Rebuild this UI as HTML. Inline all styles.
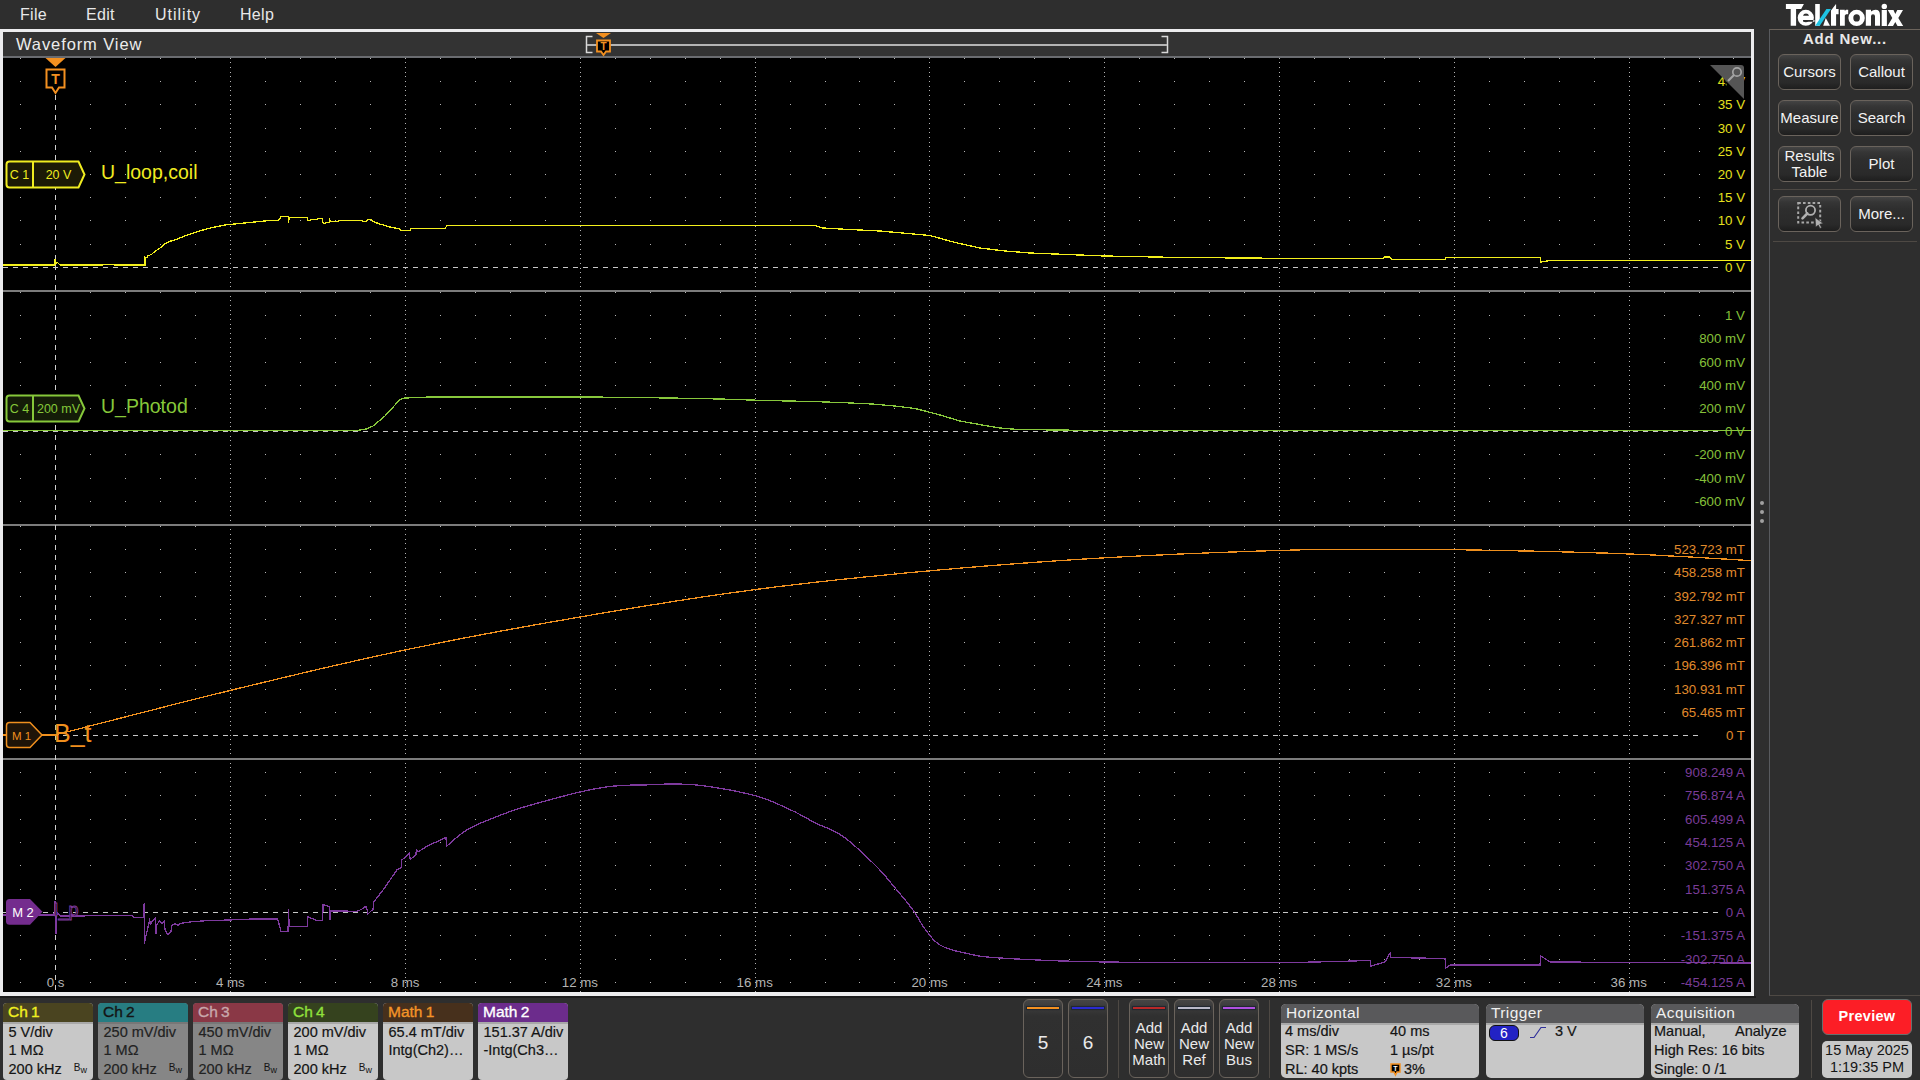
<!DOCTYPE html>
<html><head><meta charset="utf-8"><style>
*{box-sizing:border-box}
html,body{margin:0;padding:0;width:1920px;height:1080px;overflow:hidden;background:#2e2e2e;font-family:"Liberation Sans", sans-serif}
.abs{position:absolute}
.menu{left:0;top:0;width:1920px;height:29px;background:#2e2e2e}
.menu span{position:absolute;top:6px;font-size:16px;color:#e8e8e8;letter-spacing:0.3px}
.btn{position:absolute;width:63px;height:36px;border:1px solid #6a635c;border-radius:6px;background:linear-gradient(#444 0,#363636 5px,#2e2e2e 12px,#2a2a2a 80%,#1e1e1e 100%);color:#f2f2f2;font-size:15px;text-align:center;line-height:33px}
.sep{position:absolute;height:1px;background:#4e4944}
.chb{position:absolute;top:1003px;width:90px;height:77px;border-radius:4px;overflow:hidden;background:#c8c8c8}
.chb .hd{height:19px;font-size:15.5px;padding-left:5px;line-height:17.5px;-webkit-text-stroke:0.35px currentColor;word-spacing:-1px}
.chb .ln{height:2px;background:#a8a8a8}
.chb .bd{font-size:14.5px;color:#141414;padding-left:5.5px;line-height:18.9px;margin-top:-1.5px;-webkit-text-stroke:0.2px currentColor}
.bw{position:absolute;right:6px;top:60px;font-size:10px;color:#141414;line-height:10px}
.vbtn{position:absolute;top:999px;width:40px;height:79px;border:1px solid #6a635c;border-radius:6px;background:linear-gradient(#454545 0,#3a3a3a 8px,#303030 16px,#2e2e2e 100%);color:#eaeaea;text-align:center}
.vbtn .bar{position:absolute;left:3px;right:3px;top:7px;height:2px;box-shadow:0 0 1px 1px #1e2630}
.pnl{position:absolute;top:1004px;height:74px;border-radius:5px;overflow:hidden;background:#c8c8c8}
.pnl .hd{height:19px;background:#59595b;color:#f0f0f0;font-size:15.5px;line-height:17px;padding-left:5px;letter-spacing:0.4px}
.pnl .ln{height:2px;background:#a9a9a9}
.pnl .r{position:absolute;font-size:14.5px;color:#141414;white-space:nowrap;margin-top:-1.5px;line-height:17px;-webkit-text-stroke:0.2px currentColor}
</style></head><body>
<div class="abs menu">
<span style="left:20px">File</span><span style="left:86px">Edit</span><span style="left:155px;letter-spacing:1px">Utility</span><span style="left:240px">Help</span>
</div>
<svg class="abs" style="left:0;top:0" width="1920" height="32" viewBox="0 0 1920 32">
<g fill="#fff">
<path d="M1785.9 4.1 H1803.9 L1801.2 8.9 H1796.1 V25.7 H1790.7 V8.9 H1785.9 Z"/>
<path fill-rule="evenodd" d="M1813.9 17.8 A8.1 8 0 1 1 1797.7 17.8 A8.1 8 0 1 1 1813.9 17.8 Z M1803 15.8 Q1803.5 13.6 1806 13.6 Q1808.5 13.6 1809 15.8 Z M1803 20 H1814.5 V21.8 H1808.5 Q1806 22.6 1803.2 21.8 Z"/>
<path d="M1815.2 4 H1819.8 V25.8 H1815.2 Z"/>
<path d="M1823.2 25.8 L1830 25.8 L1825.8 18.1 Z"/>
<path d="M1831 10.5 L1835.8 4.3 H1836.1 V9 H1838.6 V14.2 H1836.1 V25.8 H1831 Z"/>
<path d="M1840 9.8 H1844.8 V11 L1846 9.8 H1848.2 V14.2 H1846 L1844.8 15.5 V25.8 H1840 Z"/>
<path fill-rule="evenodd" d="M1864.8 17.9 A8.2 8.1 0 1 1 1848.4 17.9 A8.2 8.1 0 1 1 1864.8 17.9 Z M1859.9 17.9 A3.3 3.7 0 1 0 1853.3 17.9 A3.3 3.7 0 1 0 1859.9 17.9 Z"/>
<path d="M1865.8 25.8 V9.8 H1871 V11.5 Q1873 9.8 1875.5 9.8 Q1880 9.8 1880 15 V25.8 H1875 V16.2 Q1875 14.2 1873 14.2 Q1871 14.2 1871 16.2 V25.8 Z"/>
<path d="M1881.7 10 H1886.9 V26 H1881.7 Z"/><circle cx="1884.3" cy="6.4" r="2.7"/>
<path d="M1887.8 10 H1893.5 L1895.3 13.9 L1897.3 10 H1903 L1898.3 18 L1903.2 26 H1897.5 L1895.3 22 L1893 26 H1887.5 L1892.3 18 Z"/>
</g>
<path d="M1815.2 25.8 L1819.8 25.8 L1831 9 L1826.4 9 Z" fill="#1ec4e4"/>
</svg>
<!-- waveform panel -->
<div class="abs" style="left:0;top:29px;width:1754px;height:967px;background:#ececee"></div><div class="abs" style="left:0;top:996px;width:1756px;height:1.5px;background:#1c1c1c"></div>
<div class="abs" style="left:3px;top:32px;width:1748px;height:24px;background:#333333"></div>
<div class="abs" style="left:3px;top:56px;width:1748px;height:2px;background:#6a6c70"></div>
<div class="abs" style="left:16px;top:35px;font-size:16.5px;color:#ececec;letter-spacing:0.9px">Waveform View</div>
<div class="abs" style="left:3px;top:58px;width:1748px;height:934px;background:#000"></div>
<svg class="abs" style="left:0;top:0" width="1920" height="1080" viewBox="0 0 1920 1080" font-family='"Liberation Sans", sans-serif'>
<!-- overview bar -->
<path d="M592.5 36.5 H586.5 V52.5 H592.5" fill="none" stroke="#d8d8d8" stroke-width="1.5"/>
<path d="M1161.5 36.5 H1167.5 V52.5 H1161.5" fill="none" stroke="#d8d8d8" stroke-width="1.5"/>
<rect x="587" y="44" width="580" height="2" fill="#b4b4b4"/>
<path d="M596 33 L611 33 L603.5 38 Z" fill="#f39020"/>
<path d="M597 40.5 H610 V51.5 H606 L603.5 55 L601 51.5 H597 Z" fill="#000" stroke="#f39020" stroke-width="1.8"/>
<text x="603.5" y="50" text-anchor="middle" fill="#f39020" font-size="10" font-weight="700">T</text>
<path d="M20 58h1v1h-1zM90 58h1v1h-1zM125 58h1v1h-1zM160 58h1v1h-1zM195 58h1v1h-1zM265 58h1v1h-1zM300 58h1v1h-1zM335 58h1v1h-1zM370 58h1v1h-1zM440 58h1v1h-1zM475 58h1v1h-1zM510 58h1v1h-1zM545 58h1v1h-1zM615 58h1v1h-1zM650 58h1v1h-1zM685 58h1v1h-1zM720 58h1v1h-1zM790 58h1v1h-1zM825 58h1v1h-1zM859 58h1v1h-1zM894 58h1v1h-1zM964 58h1v1h-1zM999 58h1v1h-1zM1034 58h1v1h-1zM1069 58h1v1h-1zM1139 58h1v1h-1zM1174 58h1v1h-1zM1209 58h1v1h-1zM1244 58h1v1h-1zM1314 58h1v1h-1zM1349 58h1v1h-1zM1384 58h1v1h-1zM1419 58h1v1h-1zM1489 58h1v1h-1zM1524 58h1v1h-1zM1559 58h1v1h-1zM1594 58h1v1h-1zM1664 58h1v1h-1zM1699 58h1v1h-1zM1733 58h1v1h-1zM20 81h1v1h-1zM90 81h1v1h-1zM125 81h1v1h-1zM160 81h1v1h-1zM195 81h1v1h-1zM265 81h1v1h-1zM300 81h1v1h-1zM335 81h1v1h-1zM370 81h1v1h-1zM440 81h1v1h-1zM475 81h1v1h-1zM510 81h1v1h-1zM545 81h1v1h-1zM615 81h1v1h-1zM650 81h1v1h-1zM685 81h1v1h-1zM720 81h1v1h-1zM790 81h1v1h-1zM825 81h1v1h-1zM859 81h1v1h-1zM894 81h1v1h-1zM964 81h1v1h-1zM999 81h1v1h-1zM1034 81h1v1h-1zM1069 81h1v1h-1zM1139 81h1v1h-1zM1174 81h1v1h-1zM1209 81h1v1h-1zM1244 81h1v1h-1zM1314 81h1v1h-1zM1349 81h1v1h-1zM1384 81h1v1h-1zM1419 81h1v1h-1zM1489 81h1v1h-1zM1524 81h1v1h-1zM1559 81h1v1h-1zM1594 81h1v1h-1zM1664 81h1v1h-1zM1699 81h1v1h-1zM1733 81h1v1h-1zM20 104h1v1h-1zM90 104h1v1h-1zM125 104h1v1h-1zM160 104h1v1h-1zM195 104h1v1h-1zM265 104h1v1h-1zM300 104h1v1h-1zM335 104h1v1h-1zM370 104h1v1h-1zM440 104h1v1h-1zM475 104h1v1h-1zM510 104h1v1h-1zM545 104h1v1h-1zM615 104h1v1h-1zM650 104h1v1h-1zM685 104h1v1h-1zM720 104h1v1h-1zM790 104h1v1h-1zM825 104h1v1h-1zM859 104h1v1h-1zM894 104h1v1h-1zM964 104h1v1h-1zM999 104h1v1h-1zM1034 104h1v1h-1zM1069 104h1v1h-1zM1139 104h1v1h-1zM1174 104h1v1h-1zM1209 104h1v1h-1zM1244 104h1v1h-1zM1314 104h1v1h-1zM1349 104h1v1h-1zM1384 104h1v1h-1zM1419 104h1v1h-1zM1489 104h1v1h-1zM1524 104h1v1h-1zM1559 104h1v1h-1zM1594 104h1v1h-1zM1664 104h1v1h-1zM1699 104h1v1h-1zM1733 104h1v1h-1zM20 128h1v1h-1zM90 128h1v1h-1zM125 128h1v1h-1zM160 128h1v1h-1zM195 128h1v1h-1zM265 128h1v1h-1zM300 128h1v1h-1zM335 128h1v1h-1zM370 128h1v1h-1zM440 128h1v1h-1zM475 128h1v1h-1zM510 128h1v1h-1zM545 128h1v1h-1zM615 128h1v1h-1zM650 128h1v1h-1zM685 128h1v1h-1zM720 128h1v1h-1zM790 128h1v1h-1zM825 128h1v1h-1zM859 128h1v1h-1zM894 128h1v1h-1zM964 128h1v1h-1zM999 128h1v1h-1zM1034 128h1v1h-1zM1069 128h1v1h-1zM1139 128h1v1h-1zM1174 128h1v1h-1zM1209 128h1v1h-1zM1244 128h1v1h-1zM1314 128h1v1h-1zM1349 128h1v1h-1zM1384 128h1v1h-1zM1419 128h1v1h-1zM1489 128h1v1h-1zM1524 128h1v1h-1zM1559 128h1v1h-1zM1594 128h1v1h-1zM1664 128h1v1h-1zM1699 128h1v1h-1zM1733 128h1v1h-1zM20 151h1v1h-1zM90 151h1v1h-1zM125 151h1v1h-1zM160 151h1v1h-1zM195 151h1v1h-1zM265 151h1v1h-1zM300 151h1v1h-1zM335 151h1v1h-1zM370 151h1v1h-1zM440 151h1v1h-1zM475 151h1v1h-1zM510 151h1v1h-1zM545 151h1v1h-1zM615 151h1v1h-1zM650 151h1v1h-1zM685 151h1v1h-1zM720 151h1v1h-1zM790 151h1v1h-1zM825 151h1v1h-1zM859 151h1v1h-1zM894 151h1v1h-1zM964 151h1v1h-1zM999 151h1v1h-1zM1034 151h1v1h-1zM1069 151h1v1h-1zM1139 151h1v1h-1zM1174 151h1v1h-1zM1209 151h1v1h-1zM1244 151h1v1h-1zM1314 151h1v1h-1zM1349 151h1v1h-1zM1384 151h1v1h-1zM1419 151h1v1h-1zM1489 151h1v1h-1zM1524 151h1v1h-1zM1559 151h1v1h-1zM1594 151h1v1h-1zM1664 151h1v1h-1zM1699 151h1v1h-1zM1733 151h1v1h-1zM20 174h1v1h-1zM90 174h1v1h-1zM125 174h1v1h-1zM160 174h1v1h-1zM195 174h1v1h-1zM265 174h1v1h-1zM300 174h1v1h-1zM335 174h1v1h-1zM370 174h1v1h-1zM440 174h1v1h-1zM475 174h1v1h-1zM510 174h1v1h-1zM545 174h1v1h-1zM615 174h1v1h-1zM650 174h1v1h-1zM685 174h1v1h-1zM720 174h1v1h-1zM790 174h1v1h-1zM825 174h1v1h-1zM859 174h1v1h-1zM894 174h1v1h-1zM964 174h1v1h-1zM999 174h1v1h-1zM1034 174h1v1h-1zM1069 174h1v1h-1zM1139 174h1v1h-1zM1174 174h1v1h-1zM1209 174h1v1h-1zM1244 174h1v1h-1zM1314 174h1v1h-1zM1349 174h1v1h-1zM1384 174h1v1h-1zM1419 174h1v1h-1zM1489 174h1v1h-1zM1524 174h1v1h-1zM1559 174h1v1h-1zM1594 174h1v1h-1zM1664 174h1v1h-1zM1699 174h1v1h-1zM1733 174h1v1h-1zM20 197h1v1h-1zM90 197h1v1h-1zM125 197h1v1h-1zM160 197h1v1h-1zM195 197h1v1h-1zM265 197h1v1h-1zM300 197h1v1h-1zM335 197h1v1h-1zM370 197h1v1h-1zM440 197h1v1h-1zM475 197h1v1h-1zM510 197h1v1h-1zM545 197h1v1h-1zM615 197h1v1h-1zM650 197h1v1h-1zM685 197h1v1h-1zM720 197h1v1h-1zM790 197h1v1h-1zM825 197h1v1h-1zM859 197h1v1h-1zM894 197h1v1h-1zM964 197h1v1h-1zM999 197h1v1h-1zM1034 197h1v1h-1zM1069 197h1v1h-1zM1139 197h1v1h-1zM1174 197h1v1h-1zM1209 197h1v1h-1zM1244 197h1v1h-1zM1314 197h1v1h-1zM1349 197h1v1h-1zM1384 197h1v1h-1zM1419 197h1v1h-1zM1489 197h1v1h-1zM1524 197h1v1h-1zM1559 197h1v1h-1zM1594 197h1v1h-1zM1664 197h1v1h-1zM1699 197h1v1h-1zM1733 197h1v1h-1zM20 220h1v1h-1zM90 220h1v1h-1zM125 220h1v1h-1zM160 220h1v1h-1zM195 220h1v1h-1zM265 220h1v1h-1zM300 220h1v1h-1zM335 220h1v1h-1zM370 220h1v1h-1zM440 220h1v1h-1zM475 220h1v1h-1zM510 220h1v1h-1zM545 220h1v1h-1zM615 220h1v1h-1zM650 220h1v1h-1zM685 220h1v1h-1zM720 220h1v1h-1zM790 220h1v1h-1zM825 220h1v1h-1zM859 220h1v1h-1zM894 220h1v1h-1zM964 220h1v1h-1zM999 220h1v1h-1zM1034 220h1v1h-1zM1069 220h1v1h-1zM1139 220h1v1h-1zM1174 220h1v1h-1zM1209 220h1v1h-1zM1244 220h1v1h-1zM1314 220h1v1h-1zM1349 220h1v1h-1zM1384 220h1v1h-1zM1419 220h1v1h-1zM1489 220h1v1h-1zM1524 220h1v1h-1zM1559 220h1v1h-1zM1594 220h1v1h-1zM1664 220h1v1h-1zM1699 220h1v1h-1zM1733 220h1v1h-1zM20 244h1v1h-1zM90 244h1v1h-1zM125 244h1v1h-1zM160 244h1v1h-1zM195 244h1v1h-1zM265 244h1v1h-1zM300 244h1v1h-1zM335 244h1v1h-1zM370 244h1v1h-1zM440 244h1v1h-1zM475 244h1v1h-1zM510 244h1v1h-1zM545 244h1v1h-1zM615 244h1v1h-1zM650 244h1v1h-1zM685 244h1v1h-1zM720 244h1v1h-1zM790 244h1v1h-1zM825 244h1v1h-1zM859 244h1v1h-1zM894 244h1v1h-1zM964 244h1v1h-1zM999 244h1v1h-1zM1034 244h1v1h-1zM1069 244h1v1h-1zM1139 244h1v1h-1zM1174 244h1v1h-1zM1209 244h1v1h-1zM1244 244h1v1h-1zM1314 244h1v1h-1zM1349 244h1v1h-1zM1384 244h1v1h-1zM1419 244h1v1h-1zM1489 244h1v1h-1zM1524 244h1v1h-1zM1559 244h1v1h-1zM1594 244h1v1h-1zM1664 244h1v1h-1zM1699 244h1v1h-1zM1733 244h1v1h-1zM20 292h1v1h-1zM90 292h1v1h-1zM125 292h1v1h-1zM160 292h1v1h-1zM195 292h1v1h-1zM265 292h1v1h-1zM300 292h1v1h-1zM335 292h1v1h-1zM370 292h1v1h-1zM440 292h1v1h-1zM475 292h1v1h-1zM510 292h1v1h-1zM545 292h1v1h-1zM615 292h1v1h-1zM650 292h1v1h-1zM685 292h1v1h-1zM720 292h1v1h-1zM790 292h1v1h-1zM825 292h1v1h-1zM859 292h1v1h-1zM894 292h1v1h-1zM964 292h1v1h-1zM999 292h1v1h-1zM1034 292h1v1h-1zM1069 292h1v1h-1zM1139 292h1v1h-1zM1174 292h1v1h-1zM1209 292h1v1h-1zM1244 292h1v1h-1zM1314 292h1v1h-1zM1349 292h1v1h-1zM1384 292h1v1h-1zM1419 292h1v1h-1zM1489 292h1v1h-1zM1524 292h1v1h-1zM1559 292h1v1h-1zM1594 292h1v1h-1zM1664 292h1v1h-1zM1699 292h1v1h-1zM1733 292h1v1h-1zM20 315h1v1h-1zM90 315h1v1h-1zM125 315h1v1h-1zM160 315h1v1h-1zM195 315h1v1h-1zM265 315h1v1h-1zM300 315h1v1h-1zM335 315h1v1h-1zM370 315h1v1h-1zM440 315h1v1h-1zM475 315h1v1h-1zM510 315h1v1h-1zM545 315h1v1h-1zM615 315h1v1h-1zM650 315h1v1h-1zM685 315h1v1h-1zM720 315h1v1h-1zM790 315h1v1h-1zM825 315h1v1h-1zM859 315h1v1h-1zM894 315h1v1h-1zM964 315h1v1h-1zM999 315h1v1h-1zM1034 315h1v1h-1zM1069 315h1v1h-1zM1139 315h1v1h-1zM1174 315h1v1h-1zM1209 315h1v1h-1zM1244 315h1v1h-1zM1314 315h1v1h-1zM1349 315h1v1h-1zM1384 315h1v1h-1zM1419 315h1v1h-1zM1489 315h1v1h-1zM1524 315h1v1h-1zM1559 315h1v1h-1zM1594 315h1v1h-1zM1664 315h1v1h-1zM1699 315h1v1h-1zM1733 315h1v1h-1zM20 338h1v1h-1zM90 338h1v1h-1zM125 338h1v1h-1zM160 338h1v1h-1zM195 338h1v1h-1zM265 338h1v1h-1zM300 338h1v1h-1zM335 338h1v1h-1zM370 338h1v1h-1zM440 338h1v1h-1zM475 338h1v1h-1zM510 338h1v1h-1zM545 338h1v1h-1zM615 338h1v1h-1zM650 338h1v1h-1zM685 338h1v1h-1zM720 338h1v1h-1zM790 338h1v1h-1zM825 338h1v1h-1zM859 338h1v1h-1zM894 338h1v1h-1zM964 338h1v1h-1zM999 338h1v1h-1zM1034 338h1v1h-1zM1069 338h1v1h-1zM1139 338h1v1h-1zM1174 338h1v1h-1zM1209 338h1v1h-1zM1244 338h1v1h-1zM1314 338h1v1h-1zM1349 338h1v1h-1zM1384 338h1v1h-1zM1419 338h1v1h-1zM1489 338h1v1h-1zM1524 338h1v1h-1zM1559 338h1v1h-1zM1594 338h1v1h-1zM1664 338h1v1h-1zM1699 338h1v1h-1zM1733 338h1v1h-1zM20 362h1v1h-1zM90 362h1v1h-1zM125 362h1v1h-1zM160 362h1v1h-1zM195 362h1v1h-1zM265 362h1v1h-1zM300 362h1v1h-1zM335 362h1v1h-1zM370 362h1v1h-1zM440 362h1v1h-1zM475 362h1v1h-1zM510 362h1v1h-1zM545 362h1v1h-1zM615 362h1v1h-1zM650 362h1v1h-1zM685 362h1v1h-1zM720 362h1v1h-1zM790 362h1v1h-1zM825 362h1v1h-1zM859 362h1v1h-1zM894 362h1v1h-1zM964 362h1v1h-1zM999 362h1v1h-1zM1034 362h1v1h-1zM1069 362h1v1h-1zM1139 362h1v1h-1zM1174 362h1v1h-1zM1209 362h1v1h-1zM1244 362h1v1h-1zM1314 362h1v1h-1zM1349 362h1v1h-1zM1384 362h1v1h-1zM1419 362h1v1h-1zM1489 362h1v1h-1zM1524 362h1v1h-1zM1559 362h1v1h-1zM1594 362h1v1h-1zM1664 362h1v1h-1zM1699 362h1v1h-1zM1733 362h1v1h-1zM20 385h1v1h-1zM90 385h1v1h-1zM125 385h1v1h-1zM160 385h1v1h-1zM195 385h1v1h-1zM265 385h1v1h-1zM300 385h1v1h-1zM335 385h1v1h-1zM370 385h1v1h-1zM440 385h1v1h-1zM475 385h1v1h-1zM510 385h1v1h-1zM545 385h1v1h-1zM615 385h1v1h-1zM650 385h1v1h-1zM685 385h1v1h-1zM720 385h1v1h-1zM790 385h1v1h-1zM825 385h1v1h-1zM859 385h1v1h-1zM894 385h1v1h-1zM964 385h1v1h-1zM999 385h1v1h-1zM1034 385h1v1h-1zM1069 385h1v1h-1zM1139 385h1v1h-1zM1174 385h1v1h-1zM1209 385h1v1h-1zM1244 385h1v1h-1zM1314 385h1v1h-1zM1349 385h1v1h-1zM1384 385h1v1h-1zM1419 385h1v1h-1zM1489 385h1v1h-1zM1524 385h1v1h-1zM1559 385h1v1h-1zM1594 385h1v1h-1zM1664 385h1v1h-1zM1699 385h1v1h-1zM1733 385h1v1h-1zM20 408h1v1h-1zM90 408h1v1h-1zM125 408h1v1h-1zM160 408h1v1h-1zM195 408h1v1h-1zM265 408h1v1h-1zM300 408h1v1h-1zM335 408h1v1h-1zM370 408h1v1h-1zM440 408h1v1h-1zM475 408h1v1h-1zM510 408h1v1h-1zM545 408h1v1h-1zM615 408h1v1h-1zM650 408h1v1h-1zM685 408h1v1h-1zM720 408h1v1h-1zM790 408h1v1h-1zM825 408h1v1h-1zM859 408h1v1h-1zM894 408h1v1h-1zM964 408h1v1h-1zM999 408h1v1h-1zM1034 408h1v1h-1zM1069 408h1v1h-1zM1139 408h1v1h-1zM1174 408h1v1h-1zM1209 408h1v1h-1zM1244 408h1v1h-1zM1314 408h1v1h-1zM1349 408h1v1h-1zM1384 408h1v1h-1zM1419 408h1v1h-1zM1489 408h1v1h-1zM1524 408h1v1h-1zM1559 408h1v1h-1zM1594 408h1v1h-1zM1664 408h1v1h-1zM1699 408h1v1h-1zM1733 408h1v1h-1zM20 454h1v1h-1zM90 454h1v1h-1zM125 454h1v1h-1zM160 454h1v1h-1zM195 454h1v1h-1zM265 454h1v1h-1zM300 454h1v1h-1zM335 454h1v1h-1zM370 454h1v1h-1zM440 454h1v1h-1zM475 454h1v1h-1zM510 454h1v1h-1zM545 454h1v1h-1zM615 454h1v1h-1zM650 454h1v1h-1zM685 454h1v1h-1zM720 454h1v1h-1zM790 454h1v1h-1zM825 454h1v1h-1zM859 454h1v1h-1zM894 454h1v1h-1zM964 454h1v1h-1zM999 454h1v1h-1zM1034 454h1v1h-1zM1069 454h1v1h-1zM1139 454h1v1h-1zM1174 454h1v1h-1zM1209 454h1v1h-1zM1244 454h1v1h-1zM1314 454h1v1h-1zM1349 454h1v1h-1zM1384 454h1v1h-1zM1419 454h1v1h-1zM1489 454h1v1h-1zM1524 454h1v1h-1zM1559 454h1v1h-1zM1594 454h1v1h-1zM1664 454h1v1h-1zM1699 454h1v1h-1zM1733 454h1v1h-1zM20 478h1v1h-1zM90 478h1v1h-1zM125 478h1v1h-1zM160 478h1v1h-1zM195 478h1v1h-1zM265 478h1v1h-1zM300 478h1v1h-1zM335 478h1v1h-1zM370 478h1v1h-1zM440 478h1v1h-1zM475 478h1v1h-1zM510 478h1v1h-1zM545 478h1v1h-1zM615 478h1v1h-1zM650 478h1v1h-1zM685 478h1v1h-1zM720 478h1v1h-1zM790 478h1v1h-1zM825 478h1v1h-1zM859 478h1v1h-1zM894 478h1v1h-1zM964 478h1v1h-1zM999 478h1v1h-1zM1034 478h1v1h-1zM1069 478h1v1h-1zM1139 478h1v1h-1zM1174 478h1v1h-1zM1209 478h1v1h-1zM1244 478h1v1h-1zM1314 478h1v1h-1zM1349 478h1v1h-1zM1384 478h1v1h-1zM1419 478h1v1h-1zM1489 478h1v1h-1zM1524 478h1v1h-1zM1559 478h1v1h-1zM1594 478h1v1h-1zM1664 478h1v1h-1zM1699 478h1v1h-1zM1733 478h1v1h-1zM20 501h1v1h-1zM90 501h1v1h-1zM125 501h1v1h-1zM160 501h1v1h-1zM195 501h1v1h-1zM265 501h1v1h-1zM300 501h1v1h-1zM335 501h1v1h-1zM370 501h1v1h-1zM440 501h1v1h-1zM475 501h1v1h-1zM510 501h1v1h-1zM545 501h1v1h-1zM615 501h1v1h-1zM650 501h1v1h-1zM685 501h1v1h-1zM720 501h1v1h-1zM790 501h1v1h-1zM825 501h1v1h-1zM859 501h1v1h-1zM894 501h1v1h-1zM964 501h1v1h-1zM999 501h1v1h-1zM1034 501h1v1h-1zM1069 501h1v1h-1zM1139 501h1v1h-1zM1174 501h1v1h-1zM1209 501h1v1h-1zM1244 501h1v1h-1zM1314 501h1v1h-1zM1349 501h1v1h-1zM1384 501h1v1h-1zM1419 501h1v1h-1zM1489 501h1v1h-1zM1524 501h1v1h-1zM1559 501h1v1h-1zM1594 501h1v1h-1zM1664 501h1v1h-1zM1699 501h1v1h-1zM1733 501h1v1h-1zM20 526h1v1h-1zM90 526h1v1h-1zM125 526h1v1h-1zM160 526h1v1h-1zM195 526h1v1h-1zM265 526h1v1h-1zM300 526h1v1h-1zM335 526h1v1h-1zM370 526h1v1h-1zM440 526h1v1h-1zM475 526h1v1h-1zM510 526h1v1h-1zM545 526h1v1h-1zM615 526h1v1h-1zM650 526h1v1h-1zM685 526h1v1h-1zM720 526h1v1h-1zM790 526h1v1h-1zM825 526h1v1h-1zM859 526h1v1h-1zM894 526h1v1h-1zM964 526h1v1h-1zM999 526h1v1h-1zM1034 526h1v1h-1zM1069 526h1v1h-1zM1139 526h1v1h-1zM1174 526h1v1h-1zM1209 526h1v1h-1zM1244 526h1v1h-1zM1314 526h1v1h-1zM1349 526h1v1h-1zM1384 526h1v1h-1zM1419 526h1v1h-1zM1489 526h1v1h-1zM1524 526h1v1h-1zM1559 526h1v1h-1zM1594 526h1v1h-1zM1664 526h1v1h-1zM1699 526h1v1h-1zM1733 526h1v1h-1zM20 549h1v1h-1zM90 549h1v1h-1zM125 549h1v1h-1zM160 549h1v1h-1zM195 549h1v1h-1zM265 549h1v1h-1zM300 549h1v1h-1zM335 549h1v1h-1zM370 549h1v1h-1zM440 549h1v1h-1zM475 549h1v1h-1zM510 549h1v1h-1zM545 549h1v1h-1zM615 549h1v1h-1zM650 549h1v1h-1zM685 549h1v1h-1zM720 549h1v1h-1zM790 549h1v1h-1zM825 549h1v1h-1zM859 549h1v1h-1zM894 549h1v1h-1zM964 549h1v1h-1zM999 549h1v1h-1zM1034 549h1v1h-1zM1069 549h1v1h-1zM1139 549h1v1h-1zM1174 549h1v1h-1zM1209 549h1v1h-1zM1244 549h1v1h-1zM1314 549h1v1h-1zM1349 549h1v1h-1zM1384 549h1v1h-1zM1419 549h1v1h-1zM1489 549h1v1h-1zM1524 549h1v1h-1zM1559 549h1v1h-1zM1594 549h1v1h-1zM1664 549h1v1h-1zM1699 549h1v1h-1zM1733 549h1v1h-1zM20 572h1v1h-1zM90 572h1v1h-1zM125 572h1v1h-1zM160 572h1v1h-1zM195 572h1v1h-1zM265 572h1v1h-1zM300 572h1v1h-1zM335 572h1v1h-1zM370 572h1v1h-1zM440 572h1v1h-1zM475 572h1v1h-1zM510 572h1v1h-1zM545 572h1v1h-1zM615 572h1v1h-1zM650 572h1v1h-1zM685 572h1v1h-1zM720 572h1v1h-1zM790 572h1v1h-1zM825 572h1v1h-1zM859 572h1v1h-1zM894 572h1v1h-1zM964 572h1v1h-1zM999 572h1v1h-1zM1034 572h1v1h-1zM1069 572h1v1h-1zM1139 572h1v1h-1zM1174 572h1v1h-1zM1209 572h1v1h-1zM1244 572h1v1h-1zM1314 572h1v1h-1zM1349 572h1v1h-1zM1384 572h1v1h-1zM1419 572h1v1h-1zM1489 572h1v1h-1zM1524 572h1v1h-1zM1559 572h1v1h-1zM1594 572h1v1h-1zM1664 572h1v1h-1zM1699 572h1v1h-1zM1733 572h1v1h-1zM20 596h1v1h-1zM90 596h1v1h-1zM125 596h1v1h-1zM160 596h1v1h-1zM195 596h1v1h-1zM265 596h1v1h-1zM300 596h1v1h-1zM335 596h1v1h-1zM370 596h1v1h-1zM440 596h1v1h-1zM475 596h1v1h-1zM510 596h1v1h-1zM545 596h1v1h-1zM615 596h1v1h-1zM650 596h1v1h-1zM685 596h1v1h-1zM720 596h1v1h-1zM790 596h1v1h-1zM825 596h1v1h-1zM859 596h1v1h-1zM894 596h1v1h-1zM964 596h1v1h-1zM999 596h1v1h-1zM1034 596h1v1h-1zM1069 596h1v1h-1zM1139 596h1v1h-1zM1174 596h1v1h-1zM1209 596h1v1h-1zM1244 596h1v1h-1zM1314 596h1v1h-1zM1349 596h1v1h-1zM1384 596h1v1h-1zM1419 596h1v1h-1zM1489 596h1v1h-1zM1524 596h1v1h-1zM1559 596h1v1h-1zM1594 596h1v1h-1zM1664 596h1v1h-1zM1699 596h1v1h-1zM1733 596h1v1h-1zM20 619h1v1h-1zM90 619h1v1h-1zM125 619h1v1h-1zM160 619h1v1h-1zM195 619h1v1h-1zM265 619h1v1h-1zM300 619h1v1h-1zM335 619h1v1h-1zM370 619h1v1h-1zM440 619h1v1h-1zM475 619h1v1h-1zM510 619h1v1h-1zM545 619h1v1h-1zM615 619h1v1h-1zM650 619h1v1h-1zM685 619h1v1h-1zM720 619h1v1h-1zM790 619h1v1h-1zM825 619h1v1h-1zM859 619h1v1h-1zM894 619h1v1h-1zM964 619h1v1h-1zM999 619h1v1h-1zM1034 619h1v1h-1zM1069 619h1v1h-1zM1139 619h1v1h-1zM1174 619h1v1h-1zM1209 619h1v1h-1zM1244 619h1v1h-1zM1314 619h1v1h-1zM1349 619h1v1h-1zM1384 619h1v1h-1zM1419 619h1v1h-1zM1489 619h1v1h-1zM1524 619h1v1h-1zM1559 619h1v1h-1zM1594 619h1v1h-1zM1664 619h1v1h-1zM1699 619h1v1h-1zM1733 619h1v1h-1zM20 642h1v1h-1zM90 642h1v1h-1zM125 642h1v1h-1zM160 642h1v1h-1zM195 642h1v1h-1zM265 642h1v1h-1zM300 642h1v1h-1zM335 642h1v1h-1zM370 642h1v1h-1zM440 642h1v1h-1zM475 642h1v1h-1zM510 642h1v1h-1zM545 642h1v1h-1zM615 642h1v1h-1zM650 642h1v1h-1zM685 642h1v1h-1zM720 642h1v1h-1zM790 642h1v1h-1zM825 642h1v1h-1zM859 642h1v1h-1zM894 642h1v1h-1zM964 642h1v1h-1zM999 642h1v1h-1zM1034 642h1v1h-1zM1069 642h1v1h-1zM1139 642h1v1h-1zM1174 642h1v1h-1zM1209 642h1v1h-1zM1244 642h1v1h-1zM1314 642h1v1h-1zM1349 642h1v1h-1zM1384 642h1v1h-1zM1419 642h1v1h-1zM1489 642h1v1h-1zM1524 642h1v1h-1zM1559 642h1v1h-1zM1594 642h1v1h-1zM1664 642h1v1h-1zM1699 642h1v1h-1zM1733 642h1v1h-1zM20 665h1v1h-1zM90 665h1v1h-1zM125 665h1v1h-1zM160 665h1v1h-1zM195 665h1v1h-1zM265 665h1v1h-1zM300 665h1v1h-1zM335 665h1v1h-1zM370 665h1v1h-1zM440 665h1v1h-1zM475 665h1v1h-1zM510 665h1v1h-1zM545 665h1v1h-1zM615 665h1v1h-1zM650 665h1v1h-1zM685 665h1v1h-1zM720 665h1v1h-1zM790 665h1v1h-1zM825 665h1v1h-1zM859 665h1v1h-1zM894 665h1v1h-1zM964 665h1v1h-1zM999 665h1v1h-1zM1034 665h1v1h-1zM1069 665h1v1h-1zM1139 665h1v1h-1zM1174 665h1v1h-1zM1209 665h1v1h-1zM1244 665h1v1h-1zM1314 665h1v1h-1zM1349 665h1v1h-1zM1384 665h1v1h-1zM1419 665h1v1h-1zM1489 665h1v1h-1zM1524 665h1v1h-1zM1559 665h1v1h-1zM1594 665h1v1h-1zM1664 665h1v1h-1zM1699 665h1v1h-1zM1733 665h1v1h-1zM20 689h1v1h-1zM90 689h1v1h-1zM125 689h1v1h-1zM160 689h1v1h-1zM195 689h1v1h-1zM265 689h1v1h-1zM300 689h1v1h-1zM335 689h1v1h-1zM370 689h1v1h-1zM440 689h1v1h-1zM475 689h1v1h-1zM510 689h1v1h-1zM545 689h1v1h-1zM615 689h1v1h-1zM650 689h1v1h-1zM685 689h1v1h-1zM720 689h1v1h-1zM790 689h1v1h-1zM825 689h1v1h-1zM859 689h1v1h-1zM894 689h1v1h-1zM964 689h1v1h-1zM999 689h1v1h-1zM1034 689h1v1h-1zM1069 689h1v1h-1zM1139 689h1v1h-1zM1174 689h1v1h-1zM1209 689h1v1h-1zM1244 689h1v1h-1zM1314 689h1v1h-1zM1349 689h1v1h-1zM1384 689h1v1h-1zM1419 689h1v1h-1zM1489 689h1v1h-1zM1524 689h1v1h-1zM1559 689h1v1h-1zM1594 689h1v1h-1zM1664 689h1v1h-1zM1699 689h1v1h-1zM1733 689h1v1h-1zM20 712h1v1h-1zM90 712h1v1h-1zM125 712h1v1h-1zM160 712h1v1h-1zM195 712h1v1h-1zM265 712h1v1h-1zM300 712h1v1h-1zM335 712h1v1h-1zM370 712h1v1h-1zM440 712h1v1h-1zM475 712h1v1h-1zM510 712h1v1h-1zM545 712h1v1h-1zM615 712h1v1h-1zM650 712h1v1h-1zM685 712h1v1h-1zM720 712h1v1h-1zM790 712h1v1h-1zM825 712h1v1h-1zM859 712h1v1h-1zM894 712h1v1h-1zM964 712h1v1h-1zM999 712h1v1h-1zM1034 712h1v1h-1zM1069 712h1v1h-1zM1139 712h1v1h-1zM1174 712h1v1h-1zM1209 712h1v1h-1zM1244 712h1v1h-1zM1314 712h1v1h-1zM1349 712h1v1h-1zM1384 712h1v1h-1zM1419 712h1v1h-1zM1489 712h1v1h-1zM1524 712h1v1h-1zM1559 712h1v1h-1zM1594 712h1v1h-1zM1664 712h1v1h-1zM1699 712h1v1h-1zM1733 712h1v1h-1zM20 772h1v1h-1zM90 772h1v1h-1zM125 772h1v1h-1zM160 772h1v1h-1zM195 772h1v1h-1zM265 772h1v1h-1zM300 772h1v1h-1zM335 772h1v1h-1zM370 772h1v1h-1zM440 772h1v1h-1zM475 772h1v1h-1zM510 772h1v1h-1zM545 772h1v1h-1zM615 772h1v1h-1zM650 772h1v1h-1zM685 772h1v1h-1zM720 772h1v1h-1zM790 772h1v1h-1zM825 772h1v1h-1zM859 772h1v1h-1zM894 772h1v1h-1zM964 772h1v1h-1zM999 772h1v1h-1zM1034 772h1v1h-1zM1069 772h1v1h-1zM1139 772h1v1h-1zM1174 772h1v1h-1zM1209 772h1v1h-1zM1244 772h1v1h-1zM1314 772h1v1h-1zM1349 772h1v1h-1zM1384 772h1v1h-1zM1419 772h1v1h-1zM1489 772h1v1h-1zM1524 772h1v1h-1zM1559 772h1v1h-1zM1594 772h1v1h-1zM1664 772h1v1h-1zM1699 772h1v1h-1zM1733 772h1v1h-1zM20 795h1v1h-1zM90 795h1v1h-1zM125 795h1v1h-1zM160 795h1v1h-1zM195 795h1v1h-1zM265 795h1v1h-1zM300 795h1v1h-1zM335 795h1v1h-1zM370 795h1v1h-1zM440 795h1v1h-1zM475 795h1v1h-1zM510 795h1v1h-1zM545 795h1v1h-1zM615 795h1v1h-1zM650 795h1v1h-1zM685 795h1v1h-1zM720 795h1v1h-1zM790 795h1v1h-1zM825 795h1v1h-1zM859 795h1v1h-1zM894 795h1v1h-1zM964 795h1v1h-1zM999 795h1v1h-1zM1034 795h1v1h-1zM1069 795h1v1h-1zM1139 795h1v1h-1zM1174 795h1v1h-1zM1209 795h1v1h-1zM1244 795h1v1h-1zM1314 795h1v1h-1zM1349 795h1v1h-1zM1384 795h1v1h-1zM1419 795h1v1h-1zM1489 795h1v1h-1zM1524 795h1v1h-1zM1559 795h1v1h-1zM1594 795h1v1h-1zM1664 795h1v1h-1zM1699 795h1v1h-1zM1733 795h1v1h-1zM20 819h1v1h-1zM90 819h1v1h-1zM125 819h1v1h-1zM160 819h1v1h-1zM195 819h1v1h-1zM265 819h1v1h-1zM300 819h1v1h-1zM335 819h1v1h-1zM370 819h1v1h-1zM440 819h1v1h-1zM475 819h1v1h-1zM510 819h1v1h-1zM545 819h1v1h-1zM615 819h1v1h-1zM650 819h1v1h-1zM685 819h1v1h-1zM720 819h1v1h-1zM790 819h1v1h-1zM825 819h1v1h-1zM859 819h1v1h-1zM894 819h1v1h-1zM964 819h1v1h-1zM999 819h1v1h-1zM1034 819h1v1h-1zM1069 819h1v1h-1zM1139 819h1v1h-1zM1174 819h1v1h-1zM1209 819h1v1h-1zM1244 819h1v1h-1zM1314 819h1v1h-1zM1349 819h1v1h-1zM1384 819h1v1h-1zM1419 819h1v1h-1zM1489 819h1v1h-1zM1524 819h1v1h-1zM1559 819h1v1h-1zM1594 819h1v1h-1zM1664 819h1v1h-1zM1699 819h1v1h-1zM1733 819h1v1h-1zM20 842h1v1h-1zM90 842h1v1h-1zM125 842h1v1h-1zM160 842h1v1h-1zM195 842h1v1h-1zM265 842h1v1h-1zM300 842h1v1h-1zM335 842h1v1h-1zM370 842h1v1h-1zM440 842h1v1h-1zM475 842h1v1h-1zM510 842h1v1h-1zM545 842h1v1h-1zM615 842h1v1h-1zM650 842h1v1h-1zM685 842h1v1h-1zM720 842h1v1h-1zM790 842h1v1h-1zM825 842h1v1h-1zM859 842h1v1h-1zM894 842h1v1h-1zM964 842h1v1h-1zM999 842h1v1h-1zM1034 842h1v1h-1zM1069 842h1v1h-1zM1139 842h1v1h-1zM1174 842h1v1h-1zM1209 842h1v1h-1zM1244 842h1v1h-1zM1314 842h1v1h-1zM1349 842h1v1h-1zM1384 842h1v1h-1zM1419 842h1v1h-1zM1489 842h1v1h-1zM1524 842h1v1h-1zM1559 842h1v1h-1zM1594 842h1v1h-1zM1664 842h1v1h-1zM1699 842h1v1h-1zM1733 842h1v1h-1zM20 865h1v1h-1zM90 865h1v1h-1zM125 865h1v1h-1zM160 865h1v1h-1zM195 865h1v1h-1zM265 865h1v1h-1zM300 865h1v1h-1zM335 865h1v1h-1zM370 865h1v1h-1zM440 865h1v1h-1zM475 865h1v1h-1zM510 865h1v1h-1zM545 865h1v1h-1zM615 865h1v1h-1zM650 865h1v1h-1zM685 865h1v1h-1zM720 865h1v1h-1zM790 865h1v1h-1zM825 865h1v1h-1zM859 865h1v1h-1zM894 865h1v1h-1zM964 865h1v1h-1zM999 865h1v1h-1zM1034 865h1v1h-1zM1069 865h1v1h-1zM1139 865h1v1h-1zM1174 865h1v1h-1zM1209 865h1v1h-1zM1244 865h1v1h-1zM1314 865h1v1h-1zM1349 865h1v1h-1zM1384 865h1v1h-1zM1419 865h1v1h-1zM1489 865h1v1h-1zM1524 865h1v1h-1zM1559 865h1v1h-1zM1594 865h1v1h-1zM1664 865h1v1h-1zM1699 865h1v1h-1zM1733 865h1v1h-1zM20 889h1v1h-1zM90 889h1v1h-1zM125 889h1v1h-1zM160 889h1v1h-1zM195 889h1v1h-1zM265 889h1v1h-1zM300 889h1v1h-1zM335 889h1v1h-1zM370 889h1v1h-1zM440 889h1v1h-1zM475 889h1v1h-1zM510 889h1v1h-1zM545 889h1v1h-1zM615 889h1v1h-1zM650 889h1v1h-1zM685 889h1v1h-1zM720 889h1v1h-1zM790 889h1v1h-1zM825 889h1v1h-1zM859 889h1v1h-1zM894 889h1v1h-1zM964 889h1v1h-1zM999 889h1v1h-1zM1034 889h1v1h-1zM1069 889h1v1h-1zM1139 889h1v1h-1zM1174 889h1v1h-1zM1209 889h1v1h-1zM1244 889h1v1h-1zM1314 889h1v1h-1zM1349 889h1v1h-1zM1384 889h1v1h-1zM1419 889h1v1h-1zM1489 889h1v1h-1zM1524 889h1v1h-1zM1559 889h1v1h-1zM1594 889h1v1h-1zM1664 889h1v1h-1zM1699 889h1v1h-1zM1733 889h1v1h-1zM20 935h1v1h-1zM90 935h1v1h-1zM125 935h1v1h-1zM160 935h1v1h-1zM195 935h1v1h-1zM265 935h1v1h-1zM300 935h1v1h-1zM335 935h1v1h-1zM370 935h1v1h-1zM440 935h1v1h-1zM475 935h1v1h-1zM510 935h1v1h-1zM545 935h1v1h-1zM615 935h1v1h-1zM650 935h1v1h-1zM685 935h1v1h-1zM720 935h1v1h-1zM790 935h1v1h-1zM825 935h1v1h-1zM859 935h1v1h-1zM894 935h1v1h-1zM964 935h1v1h-1zM999 935h1v1h-1zM1034 935h1v1h-1zM1069 935h1v1h-1zM1139 935h1v1h-1zM1174 935h1v1h-1zM1209 935h1v1h-1zM1244 935h1v1h-1zM1314 935h1v1h-1zM1349 935h1v1h-1zM1384 935h1v1h-1zM1419 935h1v1h-1zM1489 935h1v1h-1zM1524 935h1v1h-1zM1559 935h1v1h-1zM1594 935h1v1h-1zM1664 935h1v1h-1zM1699 935h1v1h-1zM1733 935h1v1h-1zM20 959h1v1h-1zM90 959h1v1h-1zM125 959h1v1h-1zM160 959h1v1h-1zM195 959h1v1h-1zM265 959h1v1h-1zM300 959h1v1h-1zM335 959h1v1h-1zM370 959h1v1h-1zM440 959h1v1h-1zM475 959h1v1h-1zM510 959h1v1h-1zM545 959h1v1h-1zM615 959h1v1h-1zM650 959h1v1h-1zM685 959h1v1h-1zM720 959h1v1h-1zM790 959h1v1h-1zM825 959h1v1h-1zM859 959h1v1h-1zM894 959h1v1h-1zM964 959h1v1h-1zM999 959h1v1h-1zM1034 959h1v1h-1zM1069 959h1v1h-1zM1139 959h1v1h-1zM1174 959h1v1h-1zM1209 959h1v1h-1zM1244 959h1v1h-1zM1314 959h1v1h-1zM1349 959h1v1h-1zM1384 959h1v1h-1zM1419 959h1v1h-1zM1489 959h1v1h-1zM1524 959h1v1h-1zM1559 959h1v1h-1zM1594 959h1v1h-1zM1664 959h1v1h-1zM1699 959h1v1h-1zM1733 959h1v1h-1zM20 982h1v1h-1zM90 982h1v1h-1zM125 982h1v1h-1zM160 982h1v1h-1zM195 982h1v1h-1zM265 982h1v1h-1zM300 982h1v1h-1zM335 982h1v1h-1zM370 982h1v1h-1zM440 982h1v1h-1zM475 982h1v1h-1zM510 982h1v1h-1zM545 982h1v1h-1zM615 982h1v1h-1zM650 982h1v1h-1zM685 982h1v1h-1zM720 982h1v1h-1zM790 982h1v1h-1zM825 982h1v1h-1zM859 982h1v1h-1zM894 982h1v1h-1zM964 982h1v1h-1zM999 982h1v1h-1zM1034 982h1v1h-1zM1069 982h1v1h-1zM1139 982h1v1h-1zM1174 982h1v1h-1zM1209 982h1v1h-1zM1244 982h1v1h-1zM1314 982h1v1h-1zM1349 982h1v1h-1zM1384 982h1v1h-1zM1419 982h1v1h-1zM1489 982h1v1h-1zM1524 982h1v1h-1zM1559 982h1v1h-1zM1594 982h1v1h-1zM1664 982h1v1h-1zM1699 982h1v1h-1zM1733 982h1v1h-1z" fill="#b4b4b4"/>
<path d="M230 58h1v1h-1zM230 62h1v1h-1zM230 67h1v1h-1zM230 72h1v1h-1zM230 76h1v1h-1zM230 81h1v1h-1zM230 86h1v1h-1zM230 90h1v1h-1zM230 95h1v1h-1zM230 100h1v1h-1zM230 104h1v1h-1zM230 109h1v1h-1zM230 114h1v1h-1zM230 118h1v1h-1zM230 123h1v1h-1zM230 128h1v1h-1zM230 132h1v1h-1zM230 137h1v1h-1zM230 142h1v1h-1zM230 146h1v1h-1zM230 151h1v1h-1zM230 156h1v1h-1zM230 160h1v1h-1zM230 165h1v1h-1zM230 170h1v1h-1zM230 174h1v1h-1zM230 179h1v1h-1zM230 184h1v1h-1zM230 188h1v1h-1zM230 193h1v1h-1zM230 198h1v1h-1zM230 202h1v1h-1zM230 207h1v1h-1zM230 212h1v1h-1zM230 216h1v1h-1zM230 221h1v1h-1zM230 226h1v1h-1zM230 230h1v1h-1zM230 235h1v1h-1zM230 240h1v1h-1zM230 244h1v1h-1zM230 249h1v1h-1zM230 254h1v1h-1zM230 258h1v1h-1zM230 263h1v1h-1zM230 268h1v1h-1zM230 272h1v1h-1zM230 277h1v1h-1zM230 282h1v1h-1zM230 286h1v1h-1zM230 291h1v1h-1zM230 296h1v1h-1zM230 300h1v1h-1zM230 305h1v1h-1zM230 310h1v1h-1zM230 314h1v1h-1zM230 319h1v1h-1zM230 324h1v1h-1zM230 328h1v1h-1zM230 333h1v1h-1zM230 338h1v1h-1zM230 342h1v1h-1zM230 347h1v1h-1zM230 352h1v1h-1zM230 356h1v1h-1zM230 361h1v1h-1zM230 366h1v1h-1zM230 370h1v1h-1zM230 375h1v1h-1zM230 380h1v1h-1zM230 384h1v1h-1zM230 389h1v1h-1zM230 394h1v1h-1zM230 398h1v1h-1zM230 403h1v1h-1zM230 408h1v1h-1zM230 412h1v1h-1zM230 417h1v1h-1zM230 422h1v1h-1zM230 426h1v1h-1zM230 431h1v1h-1zM230 436h1v1h-1zM230 440h1v1h-1zM230 445h1v1h-1zM230 450h1v1h-1zM230 454h1v1h-1zM230 459h1v1h-1zM230 464h1v1h-1zM230 468h1v1h-1zM230 473h1v1h-1zM230 478h1v1h-1zM230 482h1v1h-1zM230 487h1v1h-1zM230 492h1v1h-1zM230 496h1v1h-1zM230 501h1v1h-1zM230 506h1v1h-1zM230 510h1v1h-1zM230 515h1v1h-1zM230 520h1v1h-1zM230 525h1v1h-1zM230 529h1v1h-1zM230 534h1v1h-1zM230 539h1v1h-1zM230 543h1v1h-1zM230 548h1v1h-1zM230 553h1v1h-1zM230 557h1v1h-1zM230 562h1v1h-1zM230 567h1v1h-1zM230 571h1v1h-1zM230 576h1v1h-1zM230 581h1v1h-1zM230 585h1v1h-1zM230 590h1v1h-1zM230 595h1v1h-1zM230 599h1v1h-1zM230 604h1v1h-1zM230 609h1v1h-1zM230 613h1v1h-1zM230 618h1v1h-1zM230 623h1v1h-1zM230 627h1v1h-1zM230 632h1v1h-1zM230 637h1v1h-1zM230 641h1v1h-1zM230 646h1v1h-1zM230 651h1v1h-1zM230 655h1v1h-1zM230 660h1v1h-1zM230 665h1v1h-1zM230 669h1v1h-1zM230 674h1v1h-1zM230 679h1v1h-1zM230 683h1v1h-1zM230 688h1v1h-1zM230 693h1v1h-1zM230 697h1v1h-1zM230 702h1v1h-1zM230 707h1v1h-1zM230 711h1v1h-1zM230 716h1v1h-1zM230 721h1v1h-1zM230 725h1v1h-1zM230 730h1v1h-1zM230 735h1v1h-1zM230 739h1v1h-1zM230 744h1v1h-1zM230 749h1v1h-1zM230 753h1v1h-1zM230 758h1v1h-1zM230 763h1v1h-1zM230 767h1v1h-1zM230 772h1v1h-1zM230 777h1v1h-1zM230 781h1v1h-1zM230 786h1v1h-1zM230 791h1v1h-1zM230 795h1v1h-1zM230 800h1v1h-1zM230 805h1v1h-1zM230 809h1v1h-1zM230 814h1v1h-1zM230 819h1v1h-1zM230 823h1v1h-1zM230 828h1v1h-1zM230 833h1v1h-1zM230 837h1v1h-1zM230 842h1v1h-1zM230 847h1v1h-1zM230 851h1v1h-1zM230 856h1v1h-1zM230 861h1v1h-1zM230 865h1v1h-1zM230 870h1v1h-1zM230 875h1v1h-1zM230 879h1v1h-1zM230 884h1v1h-1zM230 889h1v1h-1zM230 893h1v1h-1zM230 898h1v1h-1zM230 903h1v1h-1zM230 907h1v1h-1zM230 912h1v1h-1zM230 917h1v1h-1zM230 921h1v1h-1zM230 926h1v1h-1zM230 931h1v1h-1zM230 935h1v1h-1zM230 940h1v1h-1zM230 945h1v1h-1zM230 949h1v1h-1zM230 954h1v1h-1zM230 959h1v1h-1zM230 963h1v1h-1zM230 968h1v1h-1zM230 973h1v1h-1zM230 977h1v1h-1zM230 982h1v1h-1zM230 987h1v1h-1zM230 991h1v1h-1zM405 58h1v1h-1zM405 62h1v1h-1zM405 67h1v1h-1zM405 72h1v1h-1zM405 76h1v1h-1zM405 81h1v1h-1zM405 86h1v1h-1zM405 90h1v1h-1zM405 95h1v1h-1zM405 100h1v1h-1zM405 104h1v1h-1zM405 109h1v1h-1zM405 114h1v1h-1zM405 118h1v1h-1zM405 123h1v1h-1zM405 128h1v1h-1zM405 132h1v1h-1zM405 137h1v1h-1zM405 142h1v1h-1zM405 146h1v1h-1zM405 151h1v1h-1zM405 156h1v1h-1zM405 160h1v1h-1zM405 165h1v1h-1zM405 170h1v1h-1zM405 174h1v1h-1zM405 179h1v1h-1zM405 184h1v1h-1zM405 188h1v1h-1zM405 193h1v1h-1zM405 198h1v1h-1zM405 202h1v1h-1zM405 207h1v1h-1zM405 212h1v1h-1zM405 216h1v1h-1zM405 221h1v1h-1zM405 226h1v1h-1zM405 230h1v1h-1zM405 235h1v1h-1zM405 240h1v1h-1zM405 244h1v1h-1zM405 249h1v1h-1zM405 254h1v1h-1zM405 258h1v1h-1zM405 263h1v1h-1zM405 268h1v1h-1zM405 272h1v1h-1zM405 277h1v1h-1zM405 282h1v1h-1zM405 286h1v1h-1zM405 291h1v1h-1zM405 296h1v1h-1zM405 300h1v1h-1zM405 305h1v1h-1zM405 310h1v1h-1zM405 314h1v1h-1zM405 319h1v1h-1zM405 324h1v1h-1zM405 328h1v1h-1zM405 333h1v1h-1zM405 338h1v1h-1zM405 342h1v1h-1zM405 347h1v1h-1zM405 352h1v1h-1zM405 356h1v1h-1zM405 361h1v1h-1zM405 366h1v1h-1zM405 370h1v1h-1zM405 375h1v1h-1zM405 380h1v1h-1zM405 384h1v1h-1zM405 389h1v1h-1zM405 394h1v1h-1zM405 398h1v1h-1zM405 403h1v1h-1zM405 408h1v1h-1zM405 412h1v1h-1zM405 417h1v1h-1zM405 422h1v1h-1zM405 426h1v1h-1zM405 431h1v1h-1zM405 436h1v1h-1zM405 440h1v1h-1zM405 445h1v1h-1zM405 450h1v1h-1zM405 454h1v1h-1zM405 459h1v1h-1zM405 464h1v1h-1zM405 468h1v1h-1zM405 473h1v1h-1zM405 478h1v1h-1zM405 482h1v1h-1zM405 487h1v1h-1zM405 492h1v1h-1zM405 496h1v1h-1zM405 501h1v1h-1zM405 506h1v1h-1zM405 510h1v1h-1zM405 515h1v1h-1zM405 520h1v1h-1zM405 525h1v1h-1zM405 529h1v1h-1zM405 534h1v1h-1zM405 539h1v1h-1zM405 543h1v1h-1zM405 548h1v1h-1zM405 553h1v1h-1zM405 557h1v1h-1zM405 562h1v1h-1zM405 567h1v1h-1zM405 571h1v1h-1zM405 576h1v1h-1zM405 581h1v1h-1zM405 585h1v1h-1zM405 590h1v1h-1zM405 595h1v1h-1zM405 599h1v1h-1zM405 604h1v1h-1zM405 609h1v1h-1zM405 613h1v1h-1zM405 618h1v1h-1zM405 623h1v1h-1zM405 627h1v1h-1zM405 632h1v1h-1zM405 637h1v1h-1zM405 641h1v1h-1zM405 646h1v1h-1zM405 651h1v1h-1zM405 655h1v1h-1zM405 660h1v1h-1zM405 665h1v1h-1zM405 669h1v1h-1zM405 674h1v1h-1zM405 679h1v1h-1zM405 683h1v1h-1zM405 688h1v1h-1zM405 693h1v1h-1zM405 697h1v1h-1zM405 702h1v1h-1zM405 707h1v1h-1zM405 711h1v1h-1zM405 716h1v1h-1zM405 721h1v1h-1zM405 725h1v1h-1zM405 730h1v1h-1zM405 735h1v1h-1zM405 739h1v1h-1zM405 744h1v1h-1zM405 749h1v1h-1zM405 753h1v1h-1zM405 758h1v1h-1zM405 763h1v1h-1zM405 767h1v1h-1zM405 772h1v1h-1zM405 777h1v1h-1zM405 781h1v1h-1zM405 786h1v1h-1zM405 791h1v1h-1zM405 795h1v1h-1zM405 800h1v1h-1zM405 805h1v1h-1zM405 809h1v1h-1zM405 814h1v1h-1zM405 819h1v1h-1zM405 823h1v1h-1zM405 828h1v1h-1zM405 833h1v1h-1zM405 837h1v1h-1zM405 842h1v1h-1zM405 847h1v1h-1zM405 851h1v1h-1zM405 856h1v1h-1zM405 861h1v1h-1zM405 865h1v1h-1zM405 870h1v1h-1zM405 875h1v1h-1zM405 879h1v1h-1zM405 884h1v1h-1zM405 889h1v1h-1zM405 893h1v1h-1zM405 898h1v1h-1zM405 903h1v1h-1zM405 907h1v1h-1zM405 912h1v1h-1zM405 917h1v1h-1zM405 921h1v1h-1zM405 926h1v1h-1zM405 931h1v1h-1zM405 935h1v1h-1zM405 940h1v1h-1zM405 945h1v1h-1zM405 949h1v1h-1zM405 954h1v1h-1zM405 959h1v1h-1zM405 963h1v1h-1zM405 968h1v1h-1zM405 973h1v1h-1zM405 977h1v1h-1zM405 982h1v1h-1zM405 987h1v1h-1zM405 991h1v1h-1zM580 58h1v1h-1zM580 62h1v1h-1zM580 67h1v1h-1zM580 72h1v1h-1zM580 76h1v1h-1zM580 81h1v1h-1zM580 86h1v1h-1zM580 90h1v1h-1zM580 95h1v1h-1zM580 100h1v1h-1zM580 104h1v1h-1zM580 109h1v1h-1zM580 114h1v1h-1zM580 118h1v1h-1zM580 123h1v1h-1zM580 128h1v1h-1zM580 132h1v1h-1zM580 137h1v1h-1zM580 142h1v1h-1zM580 146h1v1h-1zM580 151h1v1h-1zM580 156h1v1h-1zM580 160h1v1h-1zM580 165h1v1h-1zM580 170h1v1h-1zM580 174h1v1h-1zM580 179h1v1h-1zM580 184h1v1h-1zM580 188h1v1h-1zM580 193h1v1h-1zM580 198h1v1h-1zM580 202h1v1h-1zM580 207h1v1h-1zM580 212h1v1h-1zM580 216h1v1h-1zM580 221h1v1h-1zM580 226h1v1h-1zM580 230h1v1h-1zM580 235h1v1h-1zM580 240h1v1h-1zM580 244h1v1h-1zM580 249h1v1h-1zM580 254h1v1h-1zM580 258h1v1h-1zM580 263h1v1h-1zM580 268h1v1h-1zM580 272h1v1h-1zM580 277h1v1h-1zM580 282h1v1h-1zM580 286h1v1h-1zM580 291h1v1h-1zM580 296h1v1h-1zM580 300h1v1h-1zM580 305h1v1h-1zM580 310h1v1h-1zM580 314h1v1h-1zM580 319h1v1h-1zM580 324h1v1h-1zM580 328h1v1h-1zM580 333h1v1h-1zM580 338h1v1h-1zM580 342h1v1h-1zM580 347h1v1h-1zM580 352h1v1h-1zM580 356h1v1h-1zM580 361h1v1h-1zM580 366h1v1h-1zM580 370h1v1h-1zM580 375h1v1h-1zM580 380h1v1h-1zM580 384h1v1h-1zM580 389h1v1h-1zM580 394h1v1h-1zM580 398h1v1h-1zM580 403h1v1h-1zM580 408h1v1h-1zM580 412h1v1h-1zM580 417h1v1h-1zM580 422h1v1h-1zM580 426h1v1h-1zM580 431h1v1h-1zM580 436h1v1h-1zM580 440h1v1h-1zM580 445h1v1h-1zM580 450h1v1h-1zM580 454h1v1h-1zM580 459h1v1h-1zM580 464h1v1h-1zM580 468h1v1h-1zM580 473h1v1h-1zM580 478h1v1h-1zM580 482h1v1h-1zM580 487h1v1h-1zM580 492h1v1h-1zM580 496h1v1h-1zM580 501h1v1h-1zM580 506h1v1h-1zM580 510h1v1h-1zM580 515h1v1h-1zM580 520h1v1h-1zM580 525h1v1h-1zM580 529h1v1h-1zM580 534h1v1h-1zM580 539h1v1h-1zM580 543h1v1h-1zM580 548h1v1h-1zM580 553h1v1h-1zM580 557h1v1h-1zM580 562h1v1h-1zM580 567h1v1h-1zM580 571h1v1h-1zM580 576h1v1h-1zM580 581h1v1h-1zM580 585h1v1h-1zM580 590h1v1h-1zM580 595h1v1h-1zM580 599h1v1h-1zM580 604h1v1h-1zM580 609h1v1h-1zM580 613h1v1h-1zM580 618h1v1h-1zM580 623h1v1h-1zM580 627h1v1h-1zM580 632h1v1h-1zM580 637h1v1h-1zM580 641h1v1h-1zM580 646h1v1h-1zM580 651h1v1h-1zM580 655h1v1h-1zM580 660h1v1h-1zM580 665h1v1h-1zM580 669h1v1h-1zM580 674h1v1h-1zM580 679h1v1h-1zM580 683h1v1h-1zM580 688h1v1h-1zM580 693h1v1h-1zM580 697h1v1h-1zM580 702h1v1h-1zM580 707h1v1h-1zM580 711h1v1h-1zM580 716h1v1h-1zM580 721h1v1h-1zM580 725h1v1h-1zM580 730h1v1h-1zM580 735h1v1h-1zM580 739h1v1h-1zM580 744h1v1h-1zM580 749h1v1h-1zM580 753h1v1h-1zM580 758h1v1h-1zM580 763h1v1h-1zM580 767h1v1h-1zM580 772h1v1h-1zM580 777h1v1h-1zM580 781h1v1h-1zM580 786h1v1h-1zM580 791h1v1h-1zM580 795h1v1h-1zM580 800h1v1h-1zM580 805h1v1h-1zM580 809h1v1h-1zM580 814h1v1h-1zM580 819h1v1h-1zM580 823h1v1h-1zM580 828h1v1h-1zM580 833h1v1h-1zM580 837h1v1h-1zM580 842h1v1h-1zM580 847h1v1h-1zM580 851h1v1h-1zM580 856h1v1h-1zM580 861h1v1h-1zM580 865h1v1h-1zM580 870h1v1h-1zM580 875h1v1h-1zM580 879h1v1h-1zM580 884h1v1h-1zM580 889h1v1h-1zM580 893h1v1h-1zM580 898h1v1h-1zM580 903h1v1h-1zM580 907h1v1h-1zM580 912h1v1h-1zM580 917h1v1h-1zM580 921h1v1h-1zM580 926h1v1h-1zM580 931h1v1h-1zM580 935h1v1h-1zM580 940h1v1h-1zM580 945h1v1h-1zM580 949h1v1h-1zM580 954h1v1h-1zM580 959h1v1h-1zM580 963h1v1h-1zM580 968h1v1h-1zM580 973h1v1h-1zM580 977h1v1h-1zM580 982h1v1h-1zM580 987h1v1h-1zM580 991h1v1h-1zM755 58h1v1h-1zM755 62h1v1h-1zM755 67h1v1h-1zM755 72h1v1h-1zM755 76h1v1h-1zM755 81h1v1h-1zM755 86h1v1h-1zM755 90h1v1h-1zM755 95h1v1h-1zM755 100h1v1h-1zM755 104h1v1h-1zM755 109h1v1h-1zM755 114h1v1h-1zM755 118h1v1h-1zM755 123h1v1h-1zM755 128h1v1h-1zM755 132h1v1h-1zM755 137h1v1h-1zM755 142h1v1h-1zM755 146h1v1h-1zM755 151h1v1h-1zM755 156h1v1h-1zM755 160h1v1h-1zM755 165h1v1h-1zM755 170h1v1h-1zM755 174h1v1h-1zM755 179h1v1h-1zM755 184h1v1h-1zM755 188h1v1h-1zM755 193h1v1h-1zM755 198h1v1h-1zM755 202h1v1h-1zM755 207h1v1h-1zM755 212h1v1h-1zM755 216h1v1h-1zM755 221h1v1h-1zM755 226h1v1h-1zM755 230h1v1h-1zM755 235h1v1h-1zM755 240h1v1h-1zM755 244h1v1h-1zM755 249h1v1h-1zM755 254h1v1h-1zM755 258h1v1h-1zM755 263h1v1h-1zM755 268h1v1h-1zM755 272h1v1h-1zM755 277h1v1h-1zM755 282h1v1h-1zM755 286h1v1h-1zM755 291h1v1h-1zM755 296h1v1h-1zM755 300h1v1h-1zM755 305h1v1h-1zM755 310h1v1h-1zM755 314h1v1h-1zM755 319h1v1h-1zM755 324h1v1h-1zM755 328h1v1h-1zM755 333h1v1h-1zM755 338h1v1h-1zM755 342h1v1h-1zM755 347h1v1h-1zM755 352h1v1h-1zM755 356h1v1h-1zM755 361h1v1h-1zM755 366h1v1h-1zM755 370h1v1h-1zM755 375h1v1h-1zM755 380h1v1h-1zM755 384h1v1h-1zM755 389h1v1h-1zM755 394h1v1h-1zM755 398h1v1h-1zM755 403h1v1h-1zM755 408h1v1h-1zM755 412h1v1h-1zM755 417h1v1h-1zM755 422h1v1h-1zM755 426h1v1h-1zM755 431h1v1h-1zM755 436h1v1h-1zM755 440h1v1h-1zM755 445h1v1h-1zM755 450h1v1h-1zM755 454h1v1h-1zM755 459h1v1h-1zM755 464h1v1h-1zM755 468h1v1h-1zM755 473h1v1h-1zM755 478h1v1h-1zM755 482h1v1h-1zM755 487h1v1h-1zM755 492h1v1h-1zM755 496h1v1h-1zM755 501h1v1h-1zM755 506h1v1h-1zM755 510h1v1h-1zM755 515h1v1h-1zM755 520h1v1h-1zM755 525h1v1h-1zM755 529h1v1h-1zM755 534h1v1h-1zM755 539h1v1h-1zM755 543h1v1h-1zM755 548h1v1h-1zM755 553h1v1h-1zM755 557h1v1h-1zM755 562h1v1h-1zM755 567h1v1h-1zM755 571h1v1h-1zM755 576h1v1h-1zM755 581h1v1h-1zM755 585h1v1h-1zM755 590h1v1h-1zM755 595h1v1h-1zM755 599h1v1h-1zM755 604h1v1h-1zM755 609h1v1h-1zM755 613h1v1h-1zM755 618h1v1h-1zM755 623h1v1h-1zM755 627h1v1h-1zM755 632h1v1h-1zM755 637h1v1h-1zM755 641h1v1h-1zM755 646h1v1h-1zM755 651h1v1h-1zM755 655h1v1h-1zM755 660h1v1h-1zM755 665h1v1h-1zM755 669h1v1h-1zM755 674h1v1h-1zM755 679h1v1h-1zM755 683h1v1h-1zM755 688h1v1h-1zM755 693h1v1h-1zM755 697h1v1h-1zM755 702h1v1h-1zM755 707h1v1h-1zM755 711h1v1h-1zM755 716h1v1h-1zM755 721h1v1h-1zM755 725h1v1h-1zM755 730h1v1h-1zM755 735h1v1h-1zM755 739h1v1h-1zM755 744h1v1h-1zM755 749h1v1h-1zM755 753h1v1h-1zM755 758h1v1h-1zM755 763h1v1h-1zM755 767h1v1h-1zM755 772h1v1h-1zM755 777h1v1h-1zM755 781h1v1h-1zM755 786h1v1h-1zM755 791h1v1h-1zM755 795h1v1h-1zM755 800h1v1h-1zM755 805h1v1h-1zM755 809h1v1h-1zM755 814h1v1h-1zM755 819h1v1h-1zM755 823h1v1h-1zM755 828h1v1h-1zM755 833h1v1h-1zM755 837h1v1h-1zM755 842h1v1h-1zM755 847h1v1h-1zM755 851h1v1h-1zM755 856h1v1h-1zM755 861h1v1h-1zM755 865h1v1h-1zM755 870h1v1h-1zM755 875h1v1h-1zM755 879h1v1h-1zM755 884h1v1h-1zM755 889h1v1h-1zM755 893h1v1h-1zM755 898h1v1h-1zM755 903h1v1h-1zM755 907h1v1h-1zM755 912h1v1h-1zM755 917h1v1h-1zM755 921h1v1h-1zM755 926h1v1h-1zM755 931h1v1h-1zM755 935h1v1h-1zM755 940h1v1h-1zM755 945h1v1h-1zM755 949h1v1h-1zM755 954h1v1h-1zM755 959h1v1h-1zM755 963h1v1h-1zM755 968h1v1h-1zM755 973h1v1h-1zM755 977h1v1h-1zM755 982h1v1h-1zM755 987h1v1h-1zM755 991h1v1h-1zM929 58h1v1h-1zM929 62h1v1h-1zM929 67h1v1h-1zM929 72h1v1h-1zM929 76h1v1h-1zM929 81h1v1h-1zM929 86h1v1h-1zM929 90h1v1h-1zM929 95h1v1h-1zM929 100h1v1h-1zM929 104h1v1h-1zM929 109h1v1h-1zM929 114h1v1h-1zM929 118h1v1h-1zM929 123h1v1h-1zM929 128h1v1h-1zM929 132h1v1h-1zM929 137h1v1h-1zM929 142h1v1h-1zM929 146h1v1h-1zM929 151h1v1h-1zM929 156h1v1h-1zM929 160h1v1h-1zM929 165h1v1h-1zM929 170h1v1h-1zM929 174h1v1h-1zM929 179h1v1h-1zM929 184h1v1h-1zM929 188h1v1h-1zM929 193h1v1h-1zM929 198h1v1h-1zM929 202h1v1h-1zM929 207h1v1h-1zM929 212h1v1h-1zM929 216h1v1h-1zM929 221h1v1h-1zM929 226h1v1h-1zM929 230h1v1h-1zM929 235h1v1h-1zM929 240h1v1h-1zM929 244h1v1h-1zM929 249h1v1h-1zM929 254h1v1h-1zM929 258h1v1h-1zM929 263h1v1h-1zM929 268h1v1h-1zM929 272h1v1h-1zM929 277h1v1h-1zM929 282h1v1h-1zM929 286h1v1h-1zM929 291h1v1h-1zM929 296h1v1h-1zM929 300h1v1h-1zM929 305h1v1h-1zM929 310h1v1h-1zM929 314h1v1h-1zM929 319h1v1h-1zM929 324h1v1h-1zM929 328h1v1h-1zM929 333h1v1h-1zM929 338h1v1h-1zM929 342h1v1h-1zM929 347h1v1h-1zM929 352h1v1h-1zM929 356h1v1h-1zM929 361h1v1h-1zM929 366h1v1h-1zM929 370h1v1h-1zM929 375h1v1h-1zM929 380h1v1h-1zM929 384h1v1h-1zM929 389h1v1h-1zM929 394h1v1h-1zM929 398h1v1h-1zM929 403h1v1h-1zM929 408h1v1h-1zM929 412h1v1h-1zM929 417h1v1h-1zM929 422h1v1h-1zM929 426h1v1h-1zM929 431h1v1h-1zM929 436h1v1h-1zM929 440h1v1h-1zM929 445h1v1h-1zM929 450h1v1h-1zM929 454h1v1h-1zM929 459h1v1h-1zM929 464h1v1h-1zM929 468h1v1h-1zM929 473h1v1h-1zM929 478h1v1h-1zM929 482h1v1h-1zM929 487h1v1h-1zM929 492h1v1h-1zM929 496h1v1h-1zM929 501h1v1h-1zM929 506h1v1h-1zM929 510h1v1h-1zM929 515h1v1h-1zM929 520h1v1h-1zM929 525h1v1h-1zM929 529h1v1h-1zM929 534h1v1h-1zM929 539h1v1h-1zM929 543h1v1h-1zM929 548h1v1h-1zM929 553h1v1h-1zM929 557h1v1h-1zM929 562h1v1h-1zM929 567h1v1h-1zM929 571h1v1h-1zM929 576h1v1h-1zM929 581h1v1h-1zM929 585h1v1h-1zM929 590h1v1h-1zM929 595h1v1h-1zM929 599h1v1h-1zM929 604h1v1h-1zM929 609h1v1h-1zM929 613h1v1h-1zM929 618h1v1h-1zM929 623h1v1h-1zM929 627h1v1h-1zM929 632h1v1h-1zM929 637h1v1h-1zM929 641h1v1h-1zM929 646h1v1h-1zM929 651h1v1h-1zM929 655h1v1h-1zM929 660h1v1h-1zM929 665h1v1h-1zM929 669h1v1h-1zM929 674h1v1h-1zM929 679h1v1h-1zM929 683h1v1h-1zM929 688h1v1h-1zM929 693h1v1h-1zM929 697h1v1h-1zM929 702h1v1h-1zM929 707h1v1h-1zM929 711h1v1h-1zM929 716h1v1h-1zM929 721h1v1h-1zM929 725h1v1h-1zM929 730h1v1h-1zM929 735h1v1h-1zM929 739h1v1h-1zM929 744h1v1h-1zM929 749h1v1h-1zM929 753h1v1h-1zM929 758h1v1h-1zM929 763h1v1h-1zM929 767h1v1h-1zM929 772h1v1h-1zM929 777h1v1h-1zM929 781h1v1h-1zM929 786h1v1h-1zM929 791h1v1h-1zM929 795h1v1h-1zM929 800h1v1h-1zM929 805h1v1h-1zM929 809h1v1h-1zM929 814h1v1h-1zM929 819h1v1h-1zM929 823h1v1h-1zM929 828h1v1h-1zM929 833h1v1h-1zM929 837h1v1h-1zM929 842h1v1h-1zM929 847h1v1h-1zM929 851h1v1h-1zM929 856h1v1h-1zM929 861h1v1h-1zM929 865h1v1h-1zM929 870h1v1h-1zM929 875h1v1h-1zM929 879h1v1h-1zM929 884h1v1h-1zM929 889h1v1h-1zM929 893h1v1h-1zM929 898h1v1h-1zM929 903h1v1h-1zM929 907h1v1h-1zM929 912h1v1h-1zM929 917h1v1h-1zM929 921h1v1h-1zM929 926h1v1h-1zM929 931h1v1h-1zM929 935h1v1h-1zM929 940h1v1h-1zM929 945h1v1h-1zM929 949h1v1h-1zM929 954h1v1h-1zM929 959h1v1h-1zM929 963h1v1h-1zM929 968h1v1h-1zM929 973h1v1h-1zM929 977h1v1h-1zM929 982h1v1h-1zM929 987h1v1h-1zM929 991h1v1h-1zM1104 58h1v1h-1zM1104 62h1v1h-1zM1104 67h1v1h-1zM1104 72h1v1h-1zM1104 76h1v1h-1zM1104 81h1v1h-1zM1104 86h1v1h-1zM1104 90h1v1h-1zM1104 95h1v1h-1zM1104 100h1v1h-1zM1104 104h1v1h-1zM1104 109h1v1h-1zM1104 114h1v1h-1zM1104 118h1v1h-1zM1104 123h1v1h-1zM1104 128h1v1h-1zM1104 132h1v1h-1zM1104 137h1v1h-1zM1104 142h1v1h-1zM1104 146h1v1h-1zM1104 151h1v1h-1zM1104 156h1v1h-1zM1104 160h1v1h-1zM1104 165h1v1h-1zM1104 170h1v1h-1zM1104 174h1v1h-1zM1104 179h1v1h-1zM1104 184h1v1h-1zM1104 188h1v1h-1zM1104 193h1v1h-1zM1104 198h1v1h-1zM1104 202h1v1h-1zM1104 207h1v1h-1zM1104 212h1v1h-1zM1104 216h1v1h-1zM1104 221h1v1h-1zM1104 226h1v1h-1zM1104 230h1v1h-1zM1104 235h1v1h-1zM1104 240h1v1h-1zM1104 244h1v1h-1zM1104 249h1v1h-1zM1104 254h1v1h-1zM1104 258h1v1h-1zM1104 263h1v1h-1zM1104 268h1v1h-1zM1104 272h1v1h-1zM1104 277h1v1h-1zM1104 282h1v1h-1zM1104 286h1v1h-1zM1104 291h1v1h-1zM1104 296h1v1h-1zM1104 300h1v1h-1zM1104 305h1v1h-1zM1104 310h1v1h-1zM1104 314h1v1h-1zM1104 319h1v1h-1zM1104 324h1v1h-1zM1104 328h1v1h-1zM1104 333h1v1h-1zM1104 338h1v1h-1zM1104 342h1v1h-1zM1104 347h1v1h-1zM1104 352h1v1h-1zM1104 356h1v1h-1zM1104 361h1v1h-1zM1104 366h1v1h-1zM1104 370h1v1h-1zM1104 375h1v1h-1zM1104 380h1v1h-1zM1104 384h1v1h-1zM1104 389h1v1h-1zM1104 394h1v1h-1zM1104 398h1v1h-1zM1104 403h1v1h-1zM1104 408h1v1h-1zM1104 412h1v1h-1zM1104 417h1v1h-1zM1104 422h1v1h-1zM1104 426h1v1h-1zM1104 431h1v1h-1zM1104 436h1v1h-1zM1104 440h1v1h-1zM1104 445h1v1h-1zM1104 450h1v1h-1zM1104 454h1v1h-1zM1104 459h1v1h-1zM1104 464h1v1h-1zM1104 468h1v1h-1zM1104 473h1v1h-1zM1104 478h1v1h-1zM1104 482h1v1h-1zM1104 487h1v1h-1zM1104 492h1v1h-1zM1104 496h1v1h-1zM1104 501h1v1h-1zM1104 506h1v1h-1zM1104 510h1v1h-1zM1104 515h1v1h-1zM1104 520h1v1h-1zM1104 525h1v1h-1zM1104 529h1v1h-1zM1104 534h1v1h-1zM1104 539h1v1h-1zM1104 543h1v1h-1zM1104 548h1v1h-1zM1104 553h1v1h-1zM1104 557h1v1h-1zM1104 562h1v1h-1zM1104 567h1v1h-1zM1104 571h1v1h-1zM1104 576h1v1h-1zM1104 581h1v1h-1zM1104 585h1v1h-1zM1104 590h1v1h-1zM1104 595h1v1h-1zM1104 599h1v1h-1zM1104 604h1v1h-1zM1104 609h1v1h-1zM1104 613h1v1h-1zM1104 618h1v1h-1zM1104 623h1v1h-1zM1104 627h1v1h-1zM1104 632h1v1h-1zM1104 637h1v1h-1zM1104 641h1v1h-1zM1104 646h1v1h-1zM1104 651h1v1h-1zM1104 655h1v1h-1zM1104 660h1v1h-1zM1104 665h1v1h-1zM1104 669h1v1h-1zM1104 674h1v1h-1zM1104 679h1v1h-1zM1104 683h1v1h-1zM1104 688h1v1h-1zM1104 693h1v1h-1zM1104 697h1v1h-1zM1104 702h1v1h-1zM1104 707h1v1h-1zM1104 711h1v1h-1zM1104 716h1v1h-1zM1104 721h1v1h-1zM1104 725h1v1h-1zM1104 730h1v1h-1zM1104 735h1v1h-1zM1104 739h1v1h-1zM1104 744h1v1h-1zM1104 749h1v1h-1zM1104 753h1v1h-1zM1104 758h1v1h-1zM1104 763h1v1h-1zM1104 767h1v1h-1zM1104 772h1v1h-1zM1104 777h1v1h-1zM1104 781h1v1h-1zM1104 786h1v1h-1zM1104 791h1v1h-1zM1104 795h1v1h-1zM1104 800h1v1h-1zM1104 805h1v1h-1zM1104 809h1v1h-1zM1104 814h1v1h-1zM1104 819h1v1h-1zM1104 823h1v1h-1zM1104 828h1v1h-1zM1104 833h1v1h-1zM1104 837h1v1h-1zM1104 842h1v1h-1zM1104 847h1v1h-1zM1104 851h1v1h-1zM1104 856h1v1h-1zM1104 861h1v1h-1zM1104 865h1v1h-1zM1104 870h1v1h-1zM1104 875h1v1h-1zM1104 879h1v1h-1zM1104 884h1v1h-1zM1104 889h1v1h-1zM1104 893h1v1h-1zM1104 898h1v1h-1zM1104 903h1v1h-1zM1104 907h1v1h-1zM1104 912h1v1h-1zM1104 917h1v1h-1zM1104 921h1v1h-1zM1104 926h1v1h-1zM1104 931h1v1h-1zM1104 935h1v1h-1zM1104 940h1v1h-1zM1104 945h1v1h-1zM1104 949h1v1h-1zM1104 954h1v1h-1zM1104 959h1v1h-1zM1104 963h1v1h-1zM1104 968h1v1h-1zM1104 973h1v1h-1zM1104 977h1v1h-1zM1104 982h1v1h-1zM1104 987h1v1h-1zM1104 991h1v1h-1zM1279 58h1v1h-1zM1279 62h1v1h-1zM1279 67h1v1h-1zM1279 72h1v1h-1zM1279 76h1v1h-1zM1279 81h1v1h-1zM1279 86h1v1h-1zM1279 90h1v1h-1zM1279 95h1v1h-1zM1279 100h1v1h-1zM1279 104h1v1h-1zM1279 109h1v1h-1zM1279 114h1v1h-1zM1279 118h1v1h-1zM1279 123h1v1h-1zM1279 128h1v1h-1zM1279 132h1v1h-1zM1279 137h1v1h-1zM1279 142h1v1h-1zM1279 146h1v1h-1zM1279 151h1v1h-1zM1279 156h1v1h-1zM1279 160h1v1h-1zM1279 165h1v1h-1zM1279 170h1v1h-1zM1279 174h1v1h-1zM1279 179h1v1h-1zM1279 184h1v1h-1zM1279 188h1v1h-1zM1279 193h1v1h-1zM1279 198h1v1h-1zM1279 202h1v1h-1zM1279 207h1v1h-1zM1279 212h1v1h-1zM1279 216h1v1h-1zM1279 221h1v1h-1zM1279 226h1v1h-1zM1279 230h1v1h-1zM1279 235h1v1h-1zM1279 240h1v1h-1zM1279 244h1v1h-1zM1279 249h1v1h-1zM1279 254h1v1h-1zM1279 258h1v1h-1zM1279 263h1v1h-1zM1279 268h1v1h-1zM1279 272h1v1h-1zM1279 277h1v1h-1zM1279 282h1v1h-1zM1279 286h1v1h-1zM1279 291h1v1h-1zM1279 296h1v1h-1zM1279 300h1v1h-1zM1279 305h1v1h-1zM1279 310h1v1h-1zM1279 314h1v1h-1zM1279 319h1v1h-1zM1279 324h1v1h-1zM1279 328h1v1h-1zM1279 333h1v1h-1zM1279 338h1v1h-1zM1279 342h1v1h-1zM1279 347h1v1h-1zM1279 352h1v1h-1zM1279 356h1v1h-1zM1279 361h1v1h-1zM1279 366h1v1h-1zM1279 370h1v1h-1zM1279 375h1v1h-1zM1279 380h1v1h-1zM1279 384h1v1h-1zM1279 389h1v1h-1zM1279 394h1v1h-1zM1279 398h1v1h-1zM1279 403h1v1h-1zM1279 408h1v1h-1zM1279 412h1v1h-1zM1279 417h1v1h-1zM1279 422h1v1h-1zM1279 426h1v1h-1zM1279 431h1v1h-1zM1279 436h1v1h-1zM1279 440h1v1h-1zM1279 445h1v1h-1zM1279 450h1v1h-1zM1279 454h1v1h-1zM1279 459h1v1h-1zM1279 464h1v1h-1zM1279 468h1v1h-1zM1279 473h1v1h-1zM1279 478h1v1h-1zM1279 482h1v1h-1zM1279 487h1v1h-1zM1279 492h1v1h-1zM1279 496h1v1h-1zM1279 501h1v1h-1zM1279 506h1v1h-1zM1279 510h1v1h-1zM1279 515h1v1h-1zM1279 520h1v1h-1zM1279 525h1v1h-1zM1279 529h1v1h-1zM1279 534h1v1h-1zM1279 539h1v1h-1zM1279 543h1v1h-1zM1279 548h1v1h-1zM1279 553h1v1h-1zM1279 557h1v1h-1zM1279 562h1v1h-1zM1279 567h1v1h-1zM1279 571h1v1h-1zM1279 576h1v1h-1zM1279 581h1v1h-1zM1279 585h1v1h-1zM1279 590h1v1h-1zM1279 595h1v1h-1zM1279 599h1v1h-1zM1279 604h1v1h-1zM1279 609h1v1h-1zM1279 613h1v1h-1zM1279 618h1v1h-1zM1279 623h1v1h-1zM1279 627h1v1h-1zM1279 632h1v1h-1zM1279 637h1v1h-1zM1279 641h1v1h-1zM1279 646h1v1h-1zM1279 651h1v1h-1zM1279 655h1v1h-1zM1279 660h1v1h-1zM1279 665h1v1h-1zM1279 669h1v1h-1zM1279 674h1v1h-1zM1279 679h1v1h-1zM1279 683h1v1h-1zM1279 688h1v1h-1zM1279 693h1v1h-1zM1279 697h1v1h-1zM1279 702h1v1h-1zM1279 707h1v1h-1zM1279 711h1v1h-1zM1279 716h1v1h-1zM1279 721h1v1h-1zM1279 725h1v1h-1zM1279 730h1v1h-1zM1279 735h1v1h-1zM1279 739h1v1h-1zM1279 744h1v1h-1zM1279 749h1v1h-1zM1279 753h1v1h-1zM1279 758h1v1h-1zM1279 763h1v1h-1zM1279 767h1v1h-1zM1279 772h1v1h-1zM1279 777h1v1h-1zM1279 781h1v1h-1zM1279 786h1v1h-1zM1279 791h1v1h-1zM1279 795h1v1h-1zM1279 800h1v1h-1zM1279 805h1v1h-1zM1279 809h1v1h-1zM1279 814h1v1h-1zM1279 819h1v1h-1zM1279 823h1v1h-1zM1279 828h1v1h-1zM1279 833h1v1h-1zM1279 837h1v1h-1zM1279 842h1v1h-1zM1279 847h1v1h-1zM1279 851h1v1h-1zM1279 856h1v1h-1zM1279 861h1v1h-1zM1279 865h1v1h-1zM1279 870h1v1h-1zM1279 875h1v1h-1zM1279 879h1v1h-1zM1279 884h1v1h-1zM1279 889h1v1h-1zM1279 893h1v1h-1zM1279 898h1v1h-1zM1279 903h1v1h-1zM1279 907h1v1h-1zM1279 912h1v1h-1zM1279 917h1v1h-1zM1279 921h1v1h-1zM1279 926h1v1h-1zM1279 931h1v1h-1zM1279 935h1v1h-1zM1279 940h1v1h-1zM1279 945h1v1h-1zM1279 949h1v1h-1zM1279 954h1v1h-1zM1279 959h1v1h-1zM1279 963h1v1h-1zM1279 968h1v1h-1zM1279 973h1v1h-1zM1279 977h1v1h-1zM1279 982h1v1h-1zM1279 987h1v1h-1zM1279 991h1v1h-1zM1454 58h1v1h-1zM1454 62h1v1h-1zM1454 67h1v1h-1zM1454 72h1v1h-1zM1454 76h1v1h-1zM1454 81h1v1h-1zM1454 86h1v1h-1zM1454 90h1v1h-1zM1454 95h1v1h-1zM1454 100h1v1h-1zM1454 104h1v1h-1zM1454 109h1v1h-1zM1454 114h1v1h-1zM1454 118h1v1h-1zM1454 123h1v1h-1zM1454 128h1v1h-1zM1454 132h1v1h-1zM1454 137h1v1h-1zM1454 142h1v1h-1zM1454 146h1v1h-1zM1454 151h1v1h-1zM1454 156h1v1h-1zM1454 160h1v1h-1zM1454 165h1v1h-1zM1454 170h1v1h-1zM1454 174h1v1h-1zM1454 179h1v1h-1zM1454 184h1v1h-1zM1454 188h1v1h-1zM1454 193h1v1h-1zM1454 198h1v1h-1zM1454 202h1v1h-1zM1454 207h1v1h-1zM1454 212h1v1h-1zM1454 216h1v1h-1zM1454 221h1v1h-1zM1454 226h1v1h-1zM1454 230h1v1h-1zM1454 235h1v1h-1zM1454 240h1v1h-1zM1454 244h1v1h-1zM1454 249h1v1h-1zM1454 254h1v1h-1zM1454 258h1v1h-1zM1454 263h1v1h-1zM1454 268h1v1h-1zM1454 272h1v1h-1zM1454 277h1v1h-1zM1454 282h1v1h-1zM1454 286h1v1h-1zM1454 291h1v1h-1zM1454 296h1v1h-1zM1454 300h1v1h-1zM1454 305h1v1h-1zM1454 310h1v1h-1zM1454 314h1v1h-1zM1454 319h1v1h-1zM1454 324h1v1h-1zM1454 328h1v1h-1zM1454 333h1v1h-1zM1454 338h1v1h-1zM1454 342h1v1h-1zM1454 347h1v1h-1zM1454 352h1v1h-1zM1454 356h1v1h-1zM1454 361h1v1h-1zM1454 366h1v1h-1zM1454 370h1v1h-1zM1454 375h1v1h-1zM1454 380h1v1h-1zM1454 384h1v1h-1zM1454 389h1v1h-1zM1454 394h1v1h-1zM1454 398h1v1h-1zM1454 403h1v1h-1zM1454 408h1v1h-1zM1454 412h1v1h-1zM1454 417h1v1h-1zM1454 422h1v1h-1zM1454 426h1v1h-1zM1454 431h1v1h-1zM1454 436h1v1h-1zM1454 440h1v1h-1zM1454 445h1v1h-1zM1454 450h1v1h-1zM1454 454h1v1h-1zM1454 459h1v1h-1zM1454 464h1v1h-1zM1454 468h1v1h-1zM1454 473h1v1h-1zM1454 478h1v1h-1zM1454 482h1v1h-1zM1454 487h1v1h-1zM1454 492h1v1h-1zM1454 496h1v1h-1zM1454 501h1v1h-1zM1454 506h1v1h-1zM1454 510h1v1h-1zM1454 515h1v1h-1zM1454 520h1v1h-1zM1454 525h1v1h-1zM1454 529h1v1h-1zM1454 534h1v1h-1zM1454 539h1v1h-1zM1454 543h1v1h-1zM1454 548h1v1h-1zM1454 553h1v1h-1zM1454 557h1v1h-1zM1454 562h1v1h-1zM1454 567h1v1h-1zM1454 571h1v1h-1zM1454 576h1v1h-1zM1454 581h1v1h-1zM1454 585h1v1h-1zM1454 590h1v1h-1zM1454 595h1v1h-1zM1454 599h1v1h-1zM1454 604h1v1h-1zM1454 609h1v1h-1zM1454 613h1v1h-1zM1454 618h1v1h-1zM1454 623h1v1h-1zM1454 627h1v1h-1zM1454 632h1v1h-1zM1454 637h1v1h-1zM1454 641h1v1h-1zM1454 646h1v1h-1zM1454 651h1v1h-1zM1454 655h1v1h-1zM1454 660h1v1h-1zM1454 665h1v1h-1zM1454 669h1v1h-1zM1454 674h1v1h-1zM1454 679h1v1h-1zM1454 683h1v1h-1zM1454 688h1v1h-1zM1454 693h1v1h-1zM1454 697h1v1h-1zM1454 702h1v1h-1zM1454 707h1v1h-1zM1454 711h1v1h-1zM1454 716h1v1h-1zM1454 721h1v1h-1zM1454 725h1v1h-1zM1454 730h1v1h-1zM1454 735h1v1h-1zM1454 739h1v1h-1zM1454 744h1v1h-1zM1454 749h1v1h-1zM1454 753h1v1h-1zM1454 758h1v1h-1zM1454 763h1v1h-1zM1454 767h1v1h-1zM1454 772h1v1h-1zM1454 777h1v1h-1zM1454 781h1v1h-1zM1454 786h1v1h-1zM1454 791h1v1h-1zM1454 795h1v1h-1zM1454 800h1v1h-1zM1454 805h1v1h-1zM1454 809h1v1h-1zM1454 814h1v1h-1zM1454 819h1v1h-1zM1454 823h1v1h-1zM1454 828h1v1h-1zM1454 833h1v1h-1zM1454 837h1v1h-1zM1454 842h1v1h-1zM1454 847h1v1h-1zM1454 851h1v1h-1zM1454 856h1v1h-1zM1454 861h1v1h-1zM1454 865h1v1h-1zM1454 870h1v1h-1zM1454 875h1v1h-1zM1454 879h1v1h-1zM1454 884h1v1h-1zM1454 889h1v1h-1zM1454 893h1v1h-1zM1454 898h1v1h-1zM1454 903h1v1h-1zM1454 907h1v1h-1zM1454 912h1v1h-1zM1454 917h1v1h-1zM1454 921h1v1h-1zM1454 926h1v1h-1zM1454 931h1v1h-1zM1454 935h1v1h-1zM1454 940h1v1h-1zM1454 945h1v1h-1zM1454 949h1v1h-1zM1454 954h1v1h-1zM1454 959h1v1h-1zM1454 963h1v1h-1zM1454 968h1v1h-1zM1454 973h1v1h-1zM1454 977h1v1h-1zM1454 982h1v1h-1zM1454 987h1v1h-1zM1454 991h1v1h-1zM1629 58h1v1h-1zM1629 62h1v1h-1zM1629 67h1v1h-1zM1629 72h1v1h-1zM1629 76h1v1h-1zM1629 81h1v1h-1zM1629 86h1v1h-1zM1629 90h1v1h-1zM1629 95h1v1h-1zM1629 100h1v1h-1zM1629 104h1v1h-1zM1629 109h1v1h-1zM1629 114h1v1h-1zM1629 118h1v1h-1zM1629 123h1v1h-1zM1629 128h1v1h-1zM1629 132h1v1h-1zM1629 137h1v1h-1zM1629 142h1v1h-1zM1629 146h1v1h-1zM1629 151h1v1h-1zM1629 156h1v1h-1zM1629 160h1v1h-1zM1629 165h1v1h-1zM1629 170h1v1h-1zM1629 174h1v1h-1zM1629 179h1v1h-1zM1629 184h1v1h-1zM1629 188h1v1h-1zM1629 193h1v1h-1zM1629 198h1v1h-1zM1629 202h1v1h-1zM1629 207h1v1h-1zM1629 212h1v1h-1zM1629 216h1v1h-1zM1629 221h1v1h-1zM1629 226h1v1h-1zM1629 230h1v1h-1zM1629 235h1v1h-1zM1629 240h1v1h-1zM1629 244h1v1h-1zM1629 249h1v1h-1zM1629 254h1v1h-1zM1629 258h1v1h-1zM1629 263h1v1h-1zM1629 268h1v1h-1zM1629 272h1v1h-1zM1629 277h1v1h-1zM1629 282h1v1h-1zM1629 286h1v1h-1zM1629 291h1v1h-1zM1629 296h1v1h-1zM1629 300h1v1h-1zM1629 305h1v1h-1zM1629 310h1v1h-1zM1629 314h1v1h-1zM1629 319h1v1h-1zM1629 324h1v1h-1zM1629 328h1v1h-1zM1629 333h1v1h-1zM1629 338h1v1h-1zM1629 342h1v1h-1zM1629 347h1v1h-1zM1629 352h1v1h-1zM1629 356h1v1h-1zM1629 361h1v1h-1zM1629 366h1v1h-1zM1629 370h1v1h-1zM1629 375h1v1h-1zM1629 380h1v1h-1zM1629 384h1v1h-1zM1629 389h1v1h-1zM1629 394h1v1h-1zM1629 398h1v1h-1zM1629 403h1v1h-1zM1629 408h1v1h-1zM1629 412h1v1h-1zM1629 417h1v1h-1zM1629 422h1v1h-1zM1629 426h1v1h-1zM1629 431h1v1h-1zM1629 436h1v1h-1zM1629 440h1v1h-1zM1629 445h1v1h-1zM1629 450h1v1h-1zM1629 454h1v1h-1zM1629 459h1v1h-1zM1629 464h1v1h-1zM1629 468h1v1h-1zM1629 473h1v1h-1zM1629 478h1v1h-1zM1629 482h1v1h-1zM1629 487h1v1h-1zM1629 492h1v1h-1zM1629 496h1v1h-1zM1629 501h1v1h-1zM1629 506h1v1h-1zM1629 510h1v1h-1zM1629 515h1v1h-1zM1629 520h1v1h-1zM1629 525h1v1h-1zM1629 529h1v1h-1zM1629 534h1v1h-1zM1629 539h1v1h-1zM1629 543h1v1h-1zM1629 548h1v1h-1zM1629 553h1v1h-1zM1629 557h1v1h-1zM1629 562h1v1h-1zM1629 567h1v1h-1zM1629 571h1v1h-1zM1629 576h1v1h-1zM1629 581h1v1h-1zM1629 585h1v1h-1zM1629 590h1v1h-1zM1629 595h1v1h-1zM1629 599h1v1h-1zM1629 604h1v1h-1zM1629 609h1v1h-1zM1629 613h1v1h-1zM1629 618h1v1h-1zM1629 623h1v1h-1zM1629 627h1v1h-1zM1629 632h1v1h-1zM1629 637h1v1h-1zM1629 641h1v1h-1zM1629 646h1v1h-1zM1629 651h1v1h-1zM1629 655h1v1h-1zM1629 660h1v1h-1zM1629 665h1v1h-1zM1629 669h1v1h-1zM1629 674h1v1h-1zM1629 679h1v1h-1zM1629 683h1v1h-1zM1629 688h1v1h-1zM1629 693h1v1h-1zM1629 697h1v1h-1zM1629 702h1v1h-1zM1629 707h1v1h-1zM1629 711h1v1h-1zM1629 716h1v1h-1zM1629 721h1v1h-1zM1629 725h1v1h-1zM1629 730h1v1h-1zM1629 735h1v1h-1zM1629 739h1v1h-1zM1629 744h1v1h-1zM1629 749h1v1h-1zM1629 753h1v1h-1zM1629 758h1v1h-1zM1629 763h1v1h-1zM1629 767h1v1h-1zM1629 772h1v1h-1zM1629 777h1v1h-1zM1629 781h1v1h-1zM1629 786h1v1h-1zM1629 791h1v1h-1zM1629 795h1v1h-1zM1629 800h1v1h-1zM1629 805h1v1h-1zM1629 809h1v1h-1zM1629 814h1v1h-1zM1629 819h1v1h-1zM1629 823h1v1h-1zM1629 828h1v1h-1zM1629 833h1v1h-1zM1629 837h1v1h-1zM1629 842h1v1h-1zM1629 847h1v1h-1zM1629 851h1v1h-1zM1629 856h1v1h-1zM1629 861h1v1h-1zM1629 865h1v1h-1zM1629 870h1v1h-1zM1629 875h1v1h-1zM1629 879h1v1h-1zM1629 884h1v1h-1zM1629 889h1v1h-1zM1629 893h1v1h-1zM1629 898h1v1h-1zM1629 903h1v1h-1zM1629 907h1v1h-1zM1629 912h1v1h-1zM1629 917h1v1h-1zM1629 921h1v1h-1zM1629 926h1v1h-1zM1629 931h1v1h-1zM1629 935h1v1h-1zM1629 940h1v1h-1zM1629 945h1v1h-1zM1629 949h1v1h-1zM1629 954h1v1h-1zM1629 959h1v1h-1zM1629 963h1v1h-1zM1629 968h1v1h-1zM1629 973h1v1h-1zM1629 977h1v1h-1zM1629 982h1v1h-1zM1629 987h1v1h-1zM1629 991h1v1h-1z" fill="#b4b4b4"/>
<rect x="3" y="290" width="1748" height="2" fill="#7c7c7c"/>
<rect x="3" y="524" width="1748" height="2" fill="#7c7c7c"/>
<rect x="3" y="758" width="1748" height="2" fill="#7c7c7c"/>
<line x1="3" y1="267.5" x2="1718" y2="267.5" stroke="#c8c8c8" stroke-width="1" stroke-dasharray="5 5"/>
<line x1="3" y1="431.5" x2="1745" y2="431.5" stroke="#c8c8c8" stroke-width="1" stroke-dasharray="5 5"/>
<line x1="3" y1="735.5" x2="1700" y2="735.5" stroke="#c8c8c8" stroke-width="1" stroke-dasharray="5 5"/>
<line x1="3" y1="912.5" x2="1720" y2="912.5" stroke="#c8c8c8" stroke-width="1" stroke-dasharray="5 5"/>
<line x1="55.5" y1="95" x2="55.5" y2="992" stroke="#d0d0d0" stroke-width="1" stroke-dasharray="5 5"/>
<rect x="1713.8" y="97" width="33.2" height="14" fill="#000"/>
<rect x="1713.8" y="121" width="33.2" height="14" fill="#000"/>
<rect x="1713.8" y="144" width="33.2" height="14" fill="#000"/>
<rect x="1713.8" y="167" width="33.2" height="14" fill="#000"/>
<rect x="1713.8" y="190" width="33.2" height="14" fill="#000"/>
<rect x="1713.8" y="213" width="33.2" height="14" fill="#000"/>
<rect x="1721.1" y="237" width="25.9" height="14" fill="#000"/>
<rect x="1721.1" y="260" width="25.9" height="14" fill="#000"/>
<rect x="1713.8" y="74" width="33.2" height="14" fill="#000"/>
<rect x="1721.1" y="308" width="25.9" height="14" fill="#000"/>
<rect x="1699.2" y="331" width="47.8" height="14" fill="#000"/>
<rect x="1699.2" y="355" width="47.8" height="14" fill="#000"/>
<rect x="1699.2" y="378" width="47.8" height="14" fill="#000"/>
<rect x="1699.2" y="401" width="47.8" height="14" fill="#000"/>
<rect x="1721.1" y="424" width="25.9" height="14" fill="#000"/>
<rect x="1691.9" y="447" width="55.1" height="14" fill="#000"/>
<rect x="1691.9" y="471" width="55.1" height="14" fill="#000"/>
<rect x="1691.9" y="494" width="55.1" height="14" fill="#000"/>
<rect x="1670.0" y="542" width="77.0" height="14" fill="#000"/>
<rect x="1670.0" y="565" width="77.0" height="14" fill="#000"/>
<rect x="1670.0" y="589" width="77.0" height="14" fill="#000"/>
<rect x="1670.0" y="612" width="77.0" height="14" fill="#000"/>
<rect x="1670.0" y="635" width="77.0" height="14" fill="#000"/>
<rect x="1670.0" y="658" width="77.0" height="14" fill="#000"/>
<rect x="1670.0" y="682" width="77.0" height="14" fill="#000"/>
<rect x="1677.3" y="705" width="69.7" height="14" fill="#000"/>
<rect x="1721.1" y="728" width="25.9" height="14" fill="#000"/>
<rect x="1677.3" y="765" width="69.7" height="14" fill="#000"/>
<rect x="1677.3" y="788" width="69.7" height="14" fill="#000"/>
<rect x="1677.3" y="812" width="69.7" height="14" fill="#000"/>
<rect x="1677.3" y="835" width="69.7" height="14" fill="#000"/>
<rect x="1677.3" y="858" width="69.7" height="14" fill="#000"/>
<rect x="1677.3" y="882" width="69.7" height="14" fill="#000"/>
<rect x="1721.1" y="905" width="25.9" height="14" fill="#000"/>
<rect x="1670.0" y="928" width="77.0" height="14" fill="#000"/>
<rect x="1670.0" y="952" width="77.0" height="14" fill="#000"/>
<rect x="1670.0" y="975" width="77.0" height="14" fill="#000"/>
<text x="55.5" y="987" text-anchor="middle" fill="#b4b4b4" font-size="13.3">0 s</text>
<text x="230.3" y="987" text-anchor="middle" fill="#b4b4b4" font-size="13.3">4 ms</text>
<text x="405.1" y="987" text-anchor="middle" fill="#b4b4b4" font-size="13.3">8 ms</text>
<text x="579.9" y="987" text-anchor="middle" fill="#b4b4b4" font-size="13.3">12 ms</text>
<text x="754.7" y="987" text-anchor="middle" fill="#b4b4b4" font-size="13.3">16 ms</text>
<text x="929.5" y="987" text-anchor="middle" fill="#b4b4b4" font-size="13.3">20 ms</text>
<text x="1104.3" y="987" text-anchor="middle" fill="#b4b4b4" font-size="13.3">24 ms</text>
<text x="1279.1" y="987" text-anchor="middle" fill="#b4b4b4" font-size="13.3">28 ms</text>
<text x="1453.9" y="987" text-anchor="middle" fill="#b4b4b4" font-size="13.3">32 ms</text>
<text x="1628.7" y="987" text-anchor="middle" fill="#b4b4b4" font-size="13.3">36 ms</text>
<text x="1745" y="108.8" text-anchor="end" fill="#e6e01e" font-size="13.3">35 V</text>
<text x="1745" y="132.8" text-anchor="end" fill="#e6e01e" font-size="13.3">30 V</text>
<text x="1745" y="155.8" text-anchor="end" fill="#e6e01e" font-size="13.3">25 V</text>
<text x="1745" y="178.8" text-anchor="end" fill="#e6e01e" font-size="13.3">20 V</text>
<text x="1745" y="201.8" text-anchor="end" fill="#e6e01e" font-size="13.3">15 V</text>
<text x="1745" y="224.8" text-anchor="end" fill="#e6e01e" font-size="13.3">10 V</text>
<text x="1745" y="248.8" text-anchor="end" fill="#e6e01e" font-size="13.3">5 V</text>
<text x="1745" y="271.8" text-anchor="end" fill="#e6e01e" font-size="13.3">0 V</text>
<text x="1745" y="85.8" text-anchor="end" fill="#e6e01e" font-size="13.3">45 V</text>
<text x="1745" y="319.8" text-anchor="end" fill="#86c03a" font-size="13.3">1 V</text>
<text x="1745" y="342.8" text-anchor="end" fill="#86c03a" font-size="13.3">800 mV</text>
<text x="1745" y="366.8" text-anchor="end" fill="#86c03a" font-size="13.3">600 mV</text>
<text x="1745" y="389.8" text-anchor="end" fill="#86c03a" font-size="13.3">400 mV</text>
<text x="1745" y="412.8" text-anchor="end" fill="#86c03a" font-size="13.3">200 mV</text>
<text x="1745" y="435.8" text-anchor="end" fill="#86c03a" font-size="13.3">0 V</text>
<text x="1745" y="458.8" text-anchor="end" fill="#86c03a" font-size="13.3">-200 mV</text>
<text x="1745" y="482.8" text-anchor="end" fill="#86c03a" font-size="13.3">-400 mV</text>
<text x="1745" y="505.8" text-anchor="end" fill="#86c03a" font-size="13.3">-600 mV</text>
<text x="1745" y="553.8" text-anchor="end" fill="#e08a2c" font-size="13.3">523.723 mT</text>
<text x="1745" y="576.8" text-anchor="end" fill="#e08a2c" font-size="13.3">458.258 mT</text>
<text x="1745" y="600.8" text-anchor="end" fill="#e08a2c" font-size="13.3">392.792 mT</text>
<text x="1745" y="623.8" text-anchor="end" fill="#e08a2c" font-size="13.3">327.327 mT</text>
<text x="1745" y="646.8" text-anchor="end" fill="#e08a2c" font-size="13.3">261.862 mT</text>
<text x="1745" y="669.8" text-anchor="end" fill="#e08a2c" font-size="13.3">196.396 mT</text>
<text x="1745" y="693.8" text-anchor="end" fill="#e08a2c" font-size="13.3">130.931 mT</text>
<text x="1745" y="716.8" text-anchor="end" fill="#e08a2c" font-size="13.3">65.465 mT</text>
<text x="1745" y="739.8" text-anchor="end" fill="#e08a2c" font-size="13.3">0 T</text>
<text x="1745" y="776.8" text-anchor="end" fill="#7a3c98" font-size="13.3">908.249 A</text>
<text x="1745" y="799.8" text-anchor="end" fill="#7a3c98" font-size="13.3">756.874 A</text>
<text x="1745" y="823.8" text-anchor="end" fill="#7a3c98" font-size="13.3">605.499 A</text>
<text x="1745" y="846.8" text-anchor="end" fill="#7a3c98" font-size="13.3">454.125 A</text>
<text x="1745" y="869.8" text-anchor="end" fill="#7a3c98" font-size="13.3">302.750 A</text>
<text x="1745" y="893.8" text-anchor="end" fill="#7a3c98" font-size="13.3">151.375 A</text>
<text x="1745" y="916.8" text-anchor="end" fill="#7a3c98" font-size="13.3">0 A</text>
<text x="1745" y="939.8" text-anchor="end" fill="#7a3c98" font-size="13.3">-151.375 A</text>
<text x="1745" y="963.8" text-anchor="end" fill="#7a3c98" font-size="13.3">-302.750 A</text>
<text x="1745" y="986.8" text-anchor="end" fill="#7a3c98" font-size="13.3">-454.125 A</text>
<polyline shape-rendering="crispEdges" points="3.0,265.0 54.0,265.0 55.0,259.0 56.0,264.0 57.0,262.0 60.0,265.0 100.0,265.0 110.0,264.5 115.0,265.0 145.0,265.0 145.0,257.0 147.0,258.0 148.0,256.0 150.0,255.0 152.0,254.0 155.0,251.3 160.0,248.0 165.0,243.8 170.0,241.3 175.0,240.0 187.5,235.0 200.0,230.8 212.5,227.5 225.0,225.0 250.0,222.5 270.0,220.4 278.2,220.4 280.5,218.3 280.5,216.6 288.4,216.6 288.6,222.8 289.1,217.3 307.5,217.3 307.5,220.6 310.2,220.6 310.6,219.5 317.0,219.5 317.3,218.4 322.3,218.4 322.7,222.6 324.7,223.5 326.6,222.6 329.4,222.6 329.4,218.1 330.2,221.4 338.0,221.4 338.8,220.4 362.2,220.4 363.0,221.4 366.5,221.4 368.0,219.5 370.8,219.5 373.9,221.8 377.0,223.0 380.2,224.1 384.0,225.3 388.0,226.5 391.9,227.5 398.1,228.4 401.6,230.4 410.6,230.4 410.6,228.4 445.0,228.2 447.0,225.8 815.0,225.5 823.0,228.0 840.0,229.0 880.0,231.0 930.0,235.5 955.0,242.5 980.0,248.0 1005.0,251.0 1030.0,253.0 1080.0,255.0 1105.0,256.0 1180.0,257.5 1280.0,258.3 1383.0,258.3 1384.0,257.0 1390.0,257.0 1392.0,259.6 1445.0,259.5 1446.0,257.4 1540.0,257.6 1541.0,262.0 1550.0,260.6 1751.0,260.8" fill="none" stroke="#f4f01c" stroke-width="1.3" stroke-linejoin="miter"/>
<polyline shape-rendering="crispEdges" points="3.0,430.6 357.0,430.6 367.0,428.8 373.0,426.0 385.0,416.0 395.0,405.0 400.0,399.5 405.0,398.0 430.0,397.0 590.0,397.0 670.0,398.0 720.0,399.0 765.0,400.5 812.0,401.5 840.0,402.5 872.0,404.0 895.0,406.0 915.0,408.5 925.0,411.0 940.0,415.0 960.0,421.0 985.0,425.5 1000.0,428.0 1018.0,429.5 1080.0,430.3 1751.0,430.6" fill="none" stroke="#88c83c" stroke-width="1.3"/>
<polyline shape-rendering="crispEdges" points="3.0,735.0 55.0,735.0 61.1,733.4 68.5,731.5 77.0,729.4 86.4,726.9 96.8,724.2 107.8,721.4 119.5,718.4 131.6,715.3 144.0,712.1 156.7,708.9 169.4,705.6 182.1,702.4 194.7,699.2 206.9,696.2 218.7,693.3 230.0,690.5 240.9,687.8 251.9,685.2 262.8,682.6 273.8,679.9 284.7,677.3 295.6,674.7 306.6,672.1 317.5,669.5 328.4,667.0 339.4,664.5 350.3,662.0 361.2,659.5 372.2,657.1 383.1,654.7 394.1,652.3 405.0,650.0 415.9,647.7 426.9,645.5 437.8,643.3 448.8,641.1 459.7,638.9 470.6,636.8 481.6,634.7 492.5,632.7 503.4,630.6 514.4,628.6 525.3,626.6 536.2,624.7 547.2,622.7 558.1,620.8 569.1,618.9 580.0,617.0 590.9,615.1 601.9,613.2 612.8,611.4 623.8,609.6 634.7,607.7 645.6,605.9 656.6,604.2 667.5,602.4 678.4,600.7 689.4,599.0 700.3,597.3 711.2,595.7 722.2,594.1 733.1,592.6 744.1,591.1 755.0,589.6 765.9,588.2 776.9,586.8 787.8,585.5 798.8,584.2 809.7,582.9 820.6,581.7 831.6,580.5 842.5,579.3 853.4,578.2 864.4,577.0 875.3,576.0 886.2,574.9 897.2,573.8 908.1,572.8 919.1,571.8 930.0,570.8 940.9,569.8 951.9,568.9 962.8,567.9 973.8,567.0 984.7,566.1 995.6,565.3 1006.6,564.4 1017.5,563.6 1028.4,562.8 1039.4,562.0 1050.3,561.3 1061.2,560.5 1072.2,559.8 1083.1,559.1 1094.1,558.4 1105.0,557.8 1116.1,557.2 1127.3,556.6 1138.7,556.0 1150.3,555.4 1161.9,554.9 1173.5,554.3 1185.1,553.8 1196.6,553.4 1207.9,552.9 1219.1,552.5 1230.1,552.1 1240.8,551.7 1251.2,551.3 1261.2,551.0 1270.8,550.7 1280.0,550.4 1288.7,550.2 1296.9,549.9 1304.6,549.8 1312.1,549.6 1319.2,549.5 1326.0,549.4 1332.6,549.3 1339.1,549.3 1345.4,549.2 1351.6,549.2 1357.8,549.2 1364.0,549.2 1370.3,549.2 1376.7,549.2 1383.2,549.2 1390.0,549.2 1396.8,549.2 1403.6,549.2 1410.3,549.3 1417.0,549.3 1423.7,549.3 1430.4,549.4 1437.0,549.5 1443.8,549.6 1450.5,549.6 1457.3,549.7 1464.1,549.8 1471.1,550.0 1478.1,550.1 1485.3,550.2 1492.6,550.4 1500.0,550.5 1507.6,550.7 1515.4,550.8 1523.3,551.0 1531.3,551.1 1539.5,551.3 1547.7,551.5 1556.0,551.7 1564.3,551.9 1572.7,552.1 1581.0,552.4 1589.4,552.6 1597.7,552.9 1605.9,553.1 1614.0,553.4 1622.1,553.7 1630.0,554.0 1638.0,554.3 1646.4,554.7 1655.0,555.1 1663.7,555.6 1672.5,556.1 1681.4,556.5 1690.1,557.0 1698.6,557.5 1706.9,558.0 1714.9,558.5 1722.4,558.9 1729.5,559.3 1735.9,559.7 1741.7,560.1 1746.8,560.4 1751.0,560.6" fill="none" stroke="#f0901e" stroke-width="1.3"/>
<polyline shape-rendering="crispEdges" points="3.0,915.0 54.0,915.0 55.0,901.0 56.0,934.0 57.0,912.0 60.0,916.0 132.2,915.6 134.4,917.4 143.7,917.4 144.2,903.2 144.4,943.7 145.3,938.8 148.1,926.7 149.7,920.2 150.8,923.4 155.7,917.4 156.0,933.8 156.8,924.5 159.5,921.3 161.7,923.4 164.5,921.3 165.0,930.0 167.7,934.4 171.0,931.1 172.1,925.1 174.9,923.7 178.1,925.6 180.3,923.4 191.3,921.8 206.6,920.7 228.5,920.0 250.3,919.1 277.7,919.1 279.9,927.3 281.0,931.7 288.1,931.7 288.4,909.2 289.2,926.7 307.2,926.7 307.8,916.9 316.0,920.2 322.6,920.7 323.1,904.8 329.7,906.5 330.0,919.6 330.8,910.9 357.3,911.3 361.9,909.1 364.4,907.1 366.5,907.1 367.3,911.1 367.7,914.2 373.1,909.1 373.6,902.0 382.8,890.3 389.9,880.1 397.0,869.9 401.1,867.9 401.6,860.2 409.2,853.6 410.3,859.2 415.9,855.1 416.4,849.5 418.4,851.6 426.6,846.5 441.8,839.3 445.9,837.3 446.9,846.0 452.0,841.4 453.1,840.5 454.5,839.3 456.3,837.8 458.2,836.2 460.2,834.6 462.2,833.2 464.0,831.9 465.8,830.7 467.7,829.5 469.7,828.3 472.1,827.0 475.0,825.6 478.5,824.0 482.4,822.3 486.7,820.6 491.2,818.8 495.7,817.0 500.0,815.4 503.8,813.9 507.2,812.6 510.6,811.3 514.4,810.0 519.1,808.5 525.0,806.7 532.7,804.5 541.9,801.9 551.9,799.2 562.0,796.5 571.6,794.0 580.0,792.0 587.0,790.4 593.1,789.2 598.8,788.2 604.1,787.3 609.4,786.6 615.0,786.0 620.9,785.5 627.0,785.2 633.1,785.1 639.1,785.0 644.7,784.9 650.0,784.8 654.7,784.6 658.9,784.4 662.8,784.2 666.7,784.0 670.7,784.0 675.0,784.0 679.5,784.1 683.9,784.2 688.4,784.3 693.3,784.7 698.8,785.2 705.0,786.0 712.3,787.1 720.7,788.5 729.7,790.0 738.7,791.8 747.3,793.7 755.0,795.6 761.8,797.7 768.1,800.0 774.1,802.4 779.6,804.8 784.9,807.3 790.0,809.6 794.7,811.8 799.0,814.0 802.9,816.2 806.8,818.3 810.8,820.5 815.0,822.7 819.4,824.8 824.0,826.7 828.6,828.6 833.3,830.7 838.1,833.2 843.0,836.4 848.3,840.4 853.9,845.1 859.6,850.3 865.2,855.5 870.4,860.5 875.0,865.0 878.8,868.8 882.0,872.3 884.8,875.4 887.4,878.6 890.0,881.9 893.0,885.4 896.3,889.3 899.8,893.5 903.4,897.8 906.9,902.1 910.1,906.2 913.0,910.0 915.4,913.5 917.5,916.9 919.3,920.0 921.1,923.1 922.9,926.1 925.0,929.0 927.2,931.9 929.4,934.9 931.7,937.7 934.1,940.4 936.9,942.8 940.0,945.0 943.5,946.8 947.2,948.4 951.2,949.7 955.6,950.9 960.1,951.9 965.0,953.0 969.4,954.0 973.3,954.9 977.5,955.8 982.8,956.5 990.0,957.3 1000.0,958.0 1012.6,958.8 1027.2,959.5 1043.8,960.3 1062.2,961.0 1082.6,961.5 1105.0,962.0 1131.1,962.3 1161.3,962.5 1193.4,962.6 1225.4,962.6 1254.9,962.6 1280.0,962.5 1301.0,962.3 1319.6,961.9 1335.9,961.5 1349.8,961.1 1361.2,960.7 1370.0,960.5 1371.0,966.0 1385.0,962.0 1390.0,953.0 1391.0,957.5 1445.0,958.5 1446.0,968.0 1450.0,965.0 1540.0,965.0 1541.0,956.0 1550.0,962.0 1751.0,963.0" fill="none" stroke="#7e3a9e" stroke-width="1.3"/>
<rect x="1726.5" y="73" width="17.5" height="17" fill="#000"/>
<path d="M1710 65 L1741 65 Q1744 65 1744 68 L1744 99 Z" fill="#555555"/>
<circle cx="1737" cy="72" r="4.2" fill="none" stroke="#a4a4a4" stroke-width="1.7"/><line x1="1734" y1="75" x2="1728" y2="81" stroke="#a4a4a4" stroke-width="2.2"/>
<path d="M45.5 58 L65.5 58 L55.5 67 Z" fill="#f39020"/>
<path d="M46.5 69.5 H64.5 V87.5 H59 L55.5 93 L52 87.5 H46.5 Z" fill="#000" stroke="#f39020" stroke-width="2"/>
<text x="55.5" y="84" text-anchor="middle" fill="#f39020" font-size="14" font-weight="700">T</text>
<path d="M9.5 161.5 H78.5 L84.5 174.5 L78.5 187.5 H9.5 Q6.5 187.5 6.5 184.5 V164.5 Q6.5 161.5 9.5 161.5 Z" fill="#1c1a06" stroke="#f0ec20" stroke-width="2"/>
<line x1="33" y1="161" x2="33" y2="188" stroke="#f0ec20" stroke-width="2"/>
<text x="19.5" y="179" text-anchor="middle" fill="#f0ec20" font-size="12.5">C 1</text>
<text x="58.5" y="179" text-anchor="middle" fill="#f0ec20" font-size="12.5">20 V</text>
<text x="101" y="179" fill="#f0ec20" font-size="19.5">U_loop,coil</text>
<path d="M9.5 395.5 H78.5 L84.5 408.5 L78.5 421.5 H9.5 Q6.5 421.5 6.5 418.5 V398.5 Q6.5 395.5 9.5 395.5 Z" fill="#141c08" stroke="#86c83a" stroke-width="2"/>
<line x1="33" y1="395" x2="33" y2="422" stroke="#86c83a" stroke-width="2"/>
<text x="19.5" y="413" text-anchor="middle" fill="#86c83a" font-size="12.5">C 4</text>
<text x="58.5" y="413" text-anchor="middle" fill="#86c83a" font-size="12.5">200 mV</text>
<text x="101" y="413" fill="#86c83a" font-size="19.5">U_Photod</text>
<path d="M9.5 722.5 H30 L42 735 L30 747.5 H9.5 Q6.5 747.5 6.5 744.5 V725.5 Q6.5 722.5 9.5 722.5 Z" fill="#1e1408" stroke="#f0901e" stroke-width="1.5"/>
<text x="21.5" y="740" text-anchor="middle" fill="#f0901e" font-size="11.5">M 1</text>
<text x="54" y="742" fill="#f0901e" font-size="25">B_t</text>
<path d="M9.5 899 H30 L42.5 911.8 L30 924.7 H9.5 Q6 924.7 6 921.2 V902.5 Q6 899 9.5 899 Z" fill="#742c8e"/>
<text x="23" y="916.5" text-anchor="middle" fill="#ffffff" font-size="13">M 2</text>
<text x="53.5" y="916" fill="#000" stroke="#7e3a9e" stroke-width="0.9" font-size="18">I_p</text>
</svg>
<!-- right panel -->
<div class="abs" style="left:1769px;top:29px;width:151px;height:967px;border-left:1px solid #585a5e;border-top:1px solid #6c645c;border-bottom:1px solid #4e4944"></div>
<div class="abs" style="left:1770px;top:30px;width:150px;text-align:center;font-size:15px;font-weight:700;color:#e8e8e8;letter-spacing:0.8px">Add New...</div>
<div class="btn" style="left:1778px;top:54px">Cursors</div>
<div class="btn" style="left:1850px;top:54px">Callout</div>
<div class="btn" style="left:1778px;top:100px">Measure</div>
<div class="btn" style="left:1850px;top:100px">Search</div>
<div class="btn" style="left:1778px;top:146px;line-height:16px;padding-top:0.5px">Results<br>Table</div>
<div class="btn" style="left:1850px;top:146px">Plot</div>
<div class="sep" style="left:1773px;top:189px;width:144px"></div>
<div class="btn" style="left:1778px;top:196px"></div>
<svg class="abs" style="left:1796px;top:200px" width="30" height="30" viewBox="0 0 30 30">
<rect x="2.2" y="3" width="22" height="19.5" fill="none" stroke="#a8a8a8" stroke-width="2" stroke-dasharray="2.6 2.2"/>
<circle cx="14.5" cy="10.3" r="4.6" fill="#2c2c2c" stroke="#b0b0b0" stroke-width="1.8"/>
<line x1="11.3" y1="13.5" x2="6.5" y2="18.3" stroke="#b0b0b0" stroke-width="2.6" stroke-linecap="round"/>
<path d="M19 17.5 L27.3 23.5 L23.8 24.2 L25.6 27.6 L24 28.4 L22.3 25 L19.8 27 Z" fill="#b0b0b0" stroke="#2c2c2c" stroke-width="0.6"/>
</svg>
<div class="btn" style="left:1850px;top:196px">More...</div>
<div class="sep" style="left:1773px;top:241px;width:144px"></div>
<div class="abs" style="left:1755px;top:499px;width:14px;height:28px">
<div class="abs" style="left:4.5px;top:2px;width:4px;height:4px;border-radius:2px;background:#a0a0a0"></div>
<div class="abs" style="left:4.5px;top:11px;width:4px;height:4px;border-radius:2px;background:#a0a0a0"></div>
<div class="abs" style="left:4.5px;top:20px;width:4px;height:4px;border-radius:2px;background:#a0a0a0"></div>
</div>
<!-- bottom channel badges -->
<div class="chb" style="left:3px"><div class="hd" style="background:#4a4420;color:#f0f020">Ch 1</div><div class="ln"></div><div class="bd">5 V/div<br>1 MΩ<br>200 kHz</div><div class="bw">B<sub style="font-size:9px;vertical-align:-2px">w</sub></div></div>
<div class="chb" style="left:98px;background:#868686"><div class="hd" style="background:#277d82;color:#141414">Ch 2</div><div class="ln" style="background:#777"></div><div class="bd" style="color:#222">250 mV/div<br>1 MΩ<br>200 kHz</div><div class="bw">B<sub style="font-size:9px;vertical-align:-2px">w</sub></div></div>
<div class="chb" style="left:193px;background:#868686"><div class="hd" style="background:#8a3846;color:#c8a8ac">Ch 3</div><div class="ln" style="background:#777"></div><div class="bd" style="color:#222">450 mV/div<br>1 MΩ<br>200 kHz</div><div class="bw">B<sub style="font-size:9px;vertical-align:-2px">w</sub></div></div>
<div class="chb" style="left:288px"><div class="hd" style="background:#35421e;color:#90e03c">Ch 4</div><div class="ln"></div><div class="bd">200 mV/div<br>1 MΩ<br>200 kHz</div><div class="bw">B<sub style="font-size:9px;vertical-align:-2px">w</sub></div></div>
<div class="chb" style="left:383px"><div class="hd" style="background:#47301c;color:#f49428">Math 1</div><div class="ln"></div><div class="bd">65.4 mT/div<br>Intg(Ch2)…</div></div>
<div class="chb" style="left:478px"><div class="hd" style="background:#6c2c8c;color:#ffffff">Math 2</div><div class="ln"></div><div class="bd">151.37 A/div<br>-Intg(Ch3…</div></div>
<!-- vertical buttons -->
<div class="vbtn" style="left:1023px"><div class="bar" style="background:#f39020"></div><div style="position:absolute;top:32px;width:100%;font-size:19px">5</div></div>
<div class="vbtn" style="left:1068px"><div class="bar" style="background:#2a2ad0"></div><div style="position:absolute;top:32px;width:100%;font-size:19px">6</div></div>
<div class="abs" style="left:1118px;top:1000px;width:1px;height:78px;background:#4e4944"></div>
<div class="vbtn" style="left:1129px"><div class="bar" style="background:#b82828"></div><div style="position:absolute;top:20px;width:100%;font-size:15px;line-height:16px">Add<br>New<br>Math</div></div>
<div class="vbtn" style="left:1174px"><div class="bar" style="background:#b8b8c8"></div><div style="position:absolute;top:20px;width:100%;font-size:15px;line-height:16px">Add<br>New<br>Ref</div></div>
<div class="vbtn" style="left:1219px"><div class="bar" style="background:#b050e0"></div><div style="position:absolute;top:20px;width:100%;font-size:15px;line-height:16px">Add<br>New<br>Bus</div></div>
<div class="abs" style="left:1269px;top:1000px;width:1px;height:78px;background:#4e4944"></div>
<!-- horizontal -->
<div class="pnl" style="left:1281px;width:198px"><div class="hd">Horizontal</div><div class="ln"></div>
<div class="r" style="left:4px;top:20px">4 ms/div</div><div class="r" style="left:109px;top:20px">40 ms</div>
<div class="r" style="left:4px;top:39px">SR: 1 MS/s</div><div class="r" style="left:109px;top:39px">1 µs/pt</div>
<div class="r" style="left:4px;top:58px">RL: 40 kpts</div><div class="r" style="left:123px;top:58px">3%</div>
<svg style="position:absolute;left:109px;top:59px" width="11" height="14" viewBox="0 0 11 14"><path d="M1 1 H10 V9 H7 L5.5 12 L4 9 H1 Z" fill="#000" stroke="#f39020" stroke-width="1.5"/><text x="5.5" y="8" text-anchor="middle" fill="#fff" font-size="7" font-weight="700" font-family='"Liberation Sans", sans-serif'>T</text></svg>
</div>
<!-- trigger -->
<div class="pnl" style="left:1486px;width:158px"><div class="hd">Trigger</div><div class="ln"></div>
<div class="abs" style="left:3px;top:21px;width:30px;height:16px;border-radius:6px;background:#2222c4;border:1px solid #111;color:#fff;font-size:14px;text-align:center;line-height:14px">6</div>
<svg style="position:absolute;left:43px;top:22px" width="18" height="13" viewBox="0 0 18 13"><path d="M1 11.5 H5 L12 1.5 H17" fill="none" stroke="#30309a" stroke-width="1.2"/></svg>
<div class="r" style="left:69px;top:20px">3 V</div>
</div>
<!-- acquisition -->
<div class="pnl" style="left:1651px;width:148px"><div class="hd">Acquisition</div><div class="ln"></div>
<div class="r" style="left:3px;top:20px">Manual,</div><div class="r" style="left:84px;top:20px">Analyze</div>
<div class="r" style="left:3px;top:39px">High Res: 16 bits</div>
<div class="r" style="left:3px;top:58px">Single: 0 /1</div>
</div>
<div class="abs" style="left:1811px;top:1000px;width:1px;height:78px;background:#4e4944"></div>
<div class="abs" style="left:1822px;top:999px;width:90px;height:36px;border-radius:6px;background:#fc1e26;border:1px solid #66706e;color:#fff;font-weight:700;font-size:14.5px;text-align:center;line-height:32px;letter-spacing:0.3px">Preview</div>
<div class="abs" style="left:1822px;top:1041px;width:90px;height:37px;border-radius:5px;background:#c8c8c8;color:#141414;font-size:14.5px;text-align:center;line-height:17px;padding-top:1px">15 May 2025<br>1:19:35 PM</div>
</body></html>
